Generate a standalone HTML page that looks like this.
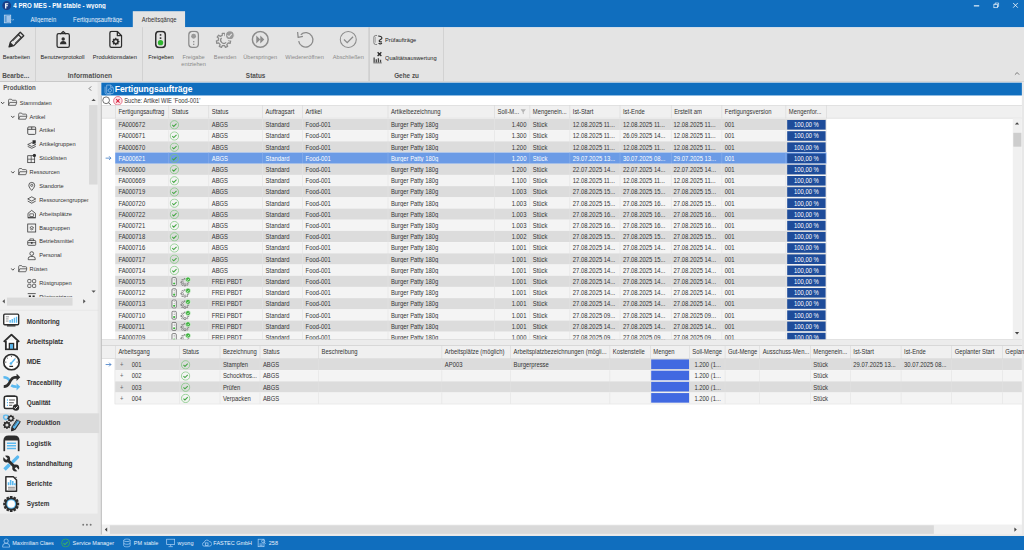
<!DOCTYPE html><html><head><meta charset="utf-8"><style>
html,body{margin:0;padding:0;width:1024px;height:550px;overflow:hidden;background:#fff}
#w{position:absolute;left:0;top:0;width:1920px;height:1032px;transform:scale(0.533333);transform-origin:0 0;font-family:"Liberation Sans",sans-serif;overflow:hidden;background:#f0f0f0}
#w div{box-sizing:border-box}
.t{position:absolute;height:20px;line-height:20px;white-space:nowrap;transform:scaleY(1.1)}
</style></head><body><div id="w">
<div style="position:absolute;left:0px;top:0px;width:1920px;height:51px;background:#106ebe"></div>
<svg style="position:absolute;left:4px;top:2px" width="17" height="17" viewBox="0 0 17 17"><circle cx="8.5" cy="8.5" r="8.5" fill="#1b3f86"/><path d="M5.5 4h6v2.2h-3.6v1.6h3v2h-3v4.2h-2.4z" fill="#fff"/></svg>
<div class="t" style="left:25px;top:0px;font-size:11.5px;color:#fff;font-weight:bold;">4 PRO MES - PM stable - wyong</div>
<div style="position:absolute;left:1826px;top:10px;width:10px;height:1.5px;background:#fff"></div>
<svg style="position:absolute;left:1862px;top:4px" width="12" height="12" viewBox="0 0 12 12"><rect x="1.5" y="4" width="6.5" height="6.5" fill="none" stroke="#fff" stroke-width="1.3"/><path d="M4 4V1.5h6.5V8H8" fill="none" stroke="#fff" stroke-width="1.3"/></svg>
<svg style="position:absolute;left:1898px;top:4px" width="12" height="12" viewBox="0 0 12 12"><path d="M1.5 1.5l9 9M10.5 1.5l-9 9" stroke="#fff" stroke-width="1.5"/></svg>
<svg style="position:absolute;left:7px;top:27px" width="20" height="17" viewBox="0 0 20 17"><rect x="1" y="1" width="12" height="15" fill="none" stroke="#cfe0f3" stroke-width="1.6"/><path d="M4 1v15" stroke="#cfe0f3" stroke-width="1.2"/><rect x="5" y="2" width="7" height="13" fill="#9ec3ea"/><path d="M15 9l2 2 2-2" fill="none" stroke="#cfe0f3" stroke-width="1.2"/></svg>
<div class="t" style="left:57px;top:26px;font-size:11px;color:#e6eefa;font-weight:normal;">Allgemein</div>
<div class="t" style="left:137px;top:26px;font-size:11px;color:#e6eefa;font-weight:normal;">Fertigungsaufträge</div>
<div style="position:absolute;left:249px;top:21px;width:98px;height:31px;background:#e4e4e4"></div>
<div class="t" style="left:266px;top:26px;font-size:11px;color:#333;font-weight:normal;">Arbeitsgänge</div>
<div style="position:absolute;left:0px;top:51px;width:1920px;height:102px;background:#e4e4e4"></div>
<div style="position:absolute;left:0px;top:151.5px;width:1920px;height:2px;background:#c6c6c6"></div>
<div style="position:absolute;left:0px;top:51px;width:249px;height:1px;background:#c8daee"></div>
<div style="position:absolute;left:347px;top:51px;width:1573px;height:1px;background:#c8daee"></div>
<div style="position:absolute;left:65.5px;top:51px;width:1.5px;height:101px;background:#c4c4c4"></div>
<div style="position:absolute;left:266.5px;top:51px;width:1.5px;height:101px;background:#c4c4c4"></div>
<div style="position:absolute;left:691px;top:51px;width:1.5px;height:101px;background:#c4c4c4"></div>
<div style="position:absolute;left:830.5px;top:51px;width:1.5px;height:101px;background:#c4c4c4"></div>
<svg style="position:absolute;left:13px;top:56px" width="36" height="36" viewBox="0 0 36 36"><g fill="none" stroke="#2d2d2d" stroke-width="2.5" stroke-linejoin="round"><path d="M4 32l2.5-9L25 4.5l6.5 6.5L13 29.5z"/><path d="M21 8.5l6.5 6.5"/><path d="M11 21L23 9M15 25L27 13" stroke-width="1.3"/></g><path d="M4 32l2.5-9 6.5 6.5z" fill="#2d2d2d"/></svg>
<div class="t" style="left:5px;top:97px;font-size:10.6px;color:#222;font-weight:normal;">Bearbeiten</div>
<div class="t" style="left:4px;top:131.5px;font-size:12px;color:#505050;font-weight:bold;">Bearbe...</div>
<svg style="position:absolute;left:105px;top:57px" width="27" height="34" viewBox="0 0 27 34"><g fill="none" stroke="#2d2d2d" stroke-width="2.4" stroke-linejoin="round"><rect x="2" y="6" width="23" height="26" rx="3"/><path d="M8 7l5.5-5 5.5 5"/></g><circle cx="13.5" cy="16" r="3.2" fill="#2d2d2d"/><path d="M7.5 26c0-4 2.5-6 6-6s6 2 6 6z" fill="#2d2d2d"/></svg>
<div class="t" style="left:76px;top:97px;font-size:10.6px;color:#222;font-weight:normal;">Benutzerprotokoll</div>
<svg style="position:absolute;left:203px;top:57px" width="27" height="34" viewBox="0 0 27 34"><g fill="none" stroke="#2d2d2d" stroke-width="2.4" stroke-linejoin="round"><path d="M3 5a3 3 0 0 1 3-3h11l8 8v19a3 3 0 0 1-3 3H6a3 3 0 0 1-3-3z"/><path d="M17 2v8h8"/></g><g transform="translate(14 21)"><circle r="4.2" fill="none" stroke="#2d2d2d" stroke-width="3"/><g stroke="#2d2d2d" stroke-width="2.2"><path d="M0-7v3M0 4v3M-7 0h3M4 0h3M-5-5l2 2M3 3l2 2M5-5l-2 2M-3 3l-2 2"/></g></g></svg>
<div class="t" style="left:174px;top:97px;font-size:10.6px;color:#222;font-weight:normal;">Produktionsdaten</div>
<div class="t" style="left:127px;top:131.5px;font-size:12.5px;color:#505050;font-weight:bold;">Informationen</div>
<svg style="position:absolute;left:290px;top:57px" width="22" height="34" viewBox="0 0 22 34"><rect x="2" y="2" width="18" height="30" rx="6" fill="none" stroke="#2d2d2d" stroke-width="2.8"/><rect x="9.5" y="7" width="3" height="3" fill="#2d2d2d"/><rect x="9.5" y="13" width="3" height="3" fill="#2d2d2d"/><circle cx="11" cy="23" r="5" fill="#2fb52f"/></svg>
<div class="t" style="left:278px;top:97px;font-size:10.6px;color:#222;font-weight:normal;">Freigeben</div>
<svg style="position:absolute;left:352px;top:57px" width="22" height="34" viewBox="0 0 22 34"><rect x="2" y="2" width="18" height="30" rx="6.5" fill="none" stroke="#8c8c8c" stroke-width="2.4"/><circle cx="11" cy="11" r="4.5" fill="#9a9a9a"/><rect x="10" y="20" width="2.4" height="2.4" fill="#8c8c8c"/><rect x="10" y="25" width="2.4" height="2.4" fill="#8c8c8c"/></svg>
<div class="t" style="left:323px;top:97px;font-size:10.6px;color:#8a8a8a;font-weight:normal;width:80px;text-align:center">Freigabe</div>
<div class="t" style="left:323px;top:110px;font-size:10.6px;color:#8a8a8a;font-weight:normal;width:80px;text-align:center">entziehen</div>
<svg style="position:absolute;left:404px;top:57px" width="36" height="34" viewBox="0 0 36 34"><g transform="translate(15 19)" fill="none" stroke="#8c8c8c" stroke-width="2.4" stroke-linejoin="round"><path d="M-2.23 -9.75L-2.26 -13.31L2.26 -13.31L2.23 -9.75L6.23 -7.82L9.00 -10.07L11.82 -6.53L9.01 -4.34L10.00 -0.00L13.48 0.76L12.47 5.17L9.01 4.34L6.23 7.82L7.81 11.01L3.74 12.97L2.23 9.75L-2.23 9.75L-3.74 12.97L-7.81 11.01L-6.23 7.82L-9.01 4.34L-12.47 5.17L-13.48 0.76L-10.00 0.00L-9.01 -4.34L-11.82 -6.53L-9.00 -10.07L-6.23 -7.82Z"/><path d="M5 3.5A6 6 0 1 1 -3.5 -5"/></g><circle cx="27" cy="9" r="8.5" fill="#999" stroke="#e4e4e4" stroke-width="2.5"/><path d="M22.5 9.2l3 3 5-5.5" fill="none" stroke="#e4e4e4" stroke-width="2"/></svg>
<div class="t" style="left:401px;top:97px;font-size:10.6px;color:#8a8a8a;font-weight:normal;">Beenden</div>
<svg style="position:absolute;left:471px;top:57px" width="34" height="34" viewBox="0 0 34 34"><circle cx="17" cy="17" r="14.8" fill="none" stroke="#8c8c8c" stroke-width="2.8"/><path d="M9.5 9.5v15l7.5-7.5zM17 9.5v15l7.5-7.5z" fill="#8c8c8c"/></svg>
<div class="t" style="left:456px;top:97px;font-size:10.6px;color:#8a8a8a;font-weight:normal;">Überspringen</div>
<div class="t" style="left:461px;top:131.5px;font-size:12px;color:#505050;font-weight:bold;">Status</div>
<svg style="position:absolute;left:555px;top:57px" width="36" height="34" viewBox="0 0 36 34"><path d="M9 8A13.5 13.5 0 1 1 5 20" fill="none" stroke="#8c8c8c" stroke-width="2.4"/><path d="M3 3l1 10 9-2" fill="none" stroke="#8c8c8c" stroke-width="2.4" stroke-linejoin="round"/></svg>
<div class="t" style="left:535px;top:97px;font-size:10.6px;color:#8a8a8a;font-weight:normal;">Wiedereröffnen</div>
<svg style="position:absolute;left:636px;top:57px" width="34" height="34" viewBox="0 0 34 34"><circle cx="17" cy="17" r="15" fill="none" stroke="#8c8c8c" stroke-width="2"/><path d="M9 17l6 6 11-11" fill="none" stroke="#8c8c8c" stroke-width="2.4"/></svg>
<div class="t" style="left:624px;top:97px;font-size:10.6px;color:#8a8a8a;font-weight:normal;">Abschließen</div>
<svg style="position:absolute;left:699px;top:64px" width="22" height="22" viewBox="0 0 22 22"><path d="M8 2.5H5.5a3.5 3.5 0 0 0-3.5 3.5v10a3.5 3.5 0 0 0 3.5 3.5H8" fill="none" stroke="#555" stroke-width="1.3"/><path d="M5 5v11" stroke="#888" stroke-width="1"/><path d="M10 3.5c4 0 7 1.5 7 4s-5 2.5-5 5 2.5 2 5 2" fill="none" stroke="#2d2d2d" stroke-width="2.2"/><path d="M11 16.5c1.5 2.5 4.5 2.5 6 0" fill="none" stroke="#2d2d2d" stroke-width="2.2"/></svg>
<div class="t" style="left:722px;top:65px;font-size:10.6px;color:#222;font-weight:normal;">Prüfaufträge</div>
<svg style="position:absolute;left:699px;top:96px" width="22" height="24" viewBox="0 0 22 24"><path d="M2.5 21V12M6.5 21v-6M10.5 21v-8M14.5 21v-5" stroke="#444" stroke-width="2.4"/><path d="M1 22h16" stroke="#444" stroke-width="1.2"/><path d="M9 2l7 7M16 2l-7 7" stroke="#2d2d2d" stroke-width="2.4"/><circle cx="12.5" cy="5.5" r="2" fill="#2d2d2d"/></svg>
<div class="t" style="left:722px;top:99px;font-size:10.6px;color:#222;font-weight:normal;">Qualitätsauswertung</div>
<div class="t" style="left:739px;top:131.5px;font-size:12px;color:#505050;font-weight:bold;">Gehe zu</div>
<svg style="position:absolute;left:1901px;top:133px" width="12" height="10" viewBox="0 0 12 10"><path d="M2 7l4-4 4 4" fill="none" stroke="#555" stroke-width="1.4"/></svg>
<div style="position:absolute;left:0px;top:154px;width:183px;height:809px;background:#f0f0f0"></div>
<div style="position:absolute;left:0px;top:963px;width:190px;height:42px;background:#e6e6e6"></div>
<div style="position:absolute;left:183px;top:154px;width:7px;height:851px;background:#e6e6e6"></div>
<div class="t" style="left:6px;top:155px;font-size:11.6px;color:#5a5a5a;font-weight:bold;">Produktion</div>
<svg style="position:absolute;left:164px;top:160px" width="10" height="12" viewBox="0 0 10 12"><path d="M7 2L3 6l4 4" fill="none" stroke="#555" stroke-width="1.4"/></svg>
<div style="position:absolute;left:0;top:178px;width:166px;height:379px;overflow:hidden">
<svg style="position:absolute;left:1.0px;top:12px" width="8" height="6" viewBox="0 0 8 6"><path d="M0.8 1.2L4 4.6l3.2-3.4" fill="none" stroke="#3a3a3a" stroke-width="1.7"/></svg>
<svg style="position:absolute;left:14.0px;top:5.5px" width="19" height="16" viewBox="0 0 19 16"><path d="M2 13.5V4a2 2 0 0 1 2-2h3.5l1.5 2h6a2 2 0 0 1 2 2v2" fill="none" stroke="#4a4a4a" stroke-width="1.5" stroke-linejoin="round"/><path d="M2 13.5l2.2-5.5h13.3l-2.2 5.5z" fill="none" stroke="#4a4a4a" stroke-width="1.5" stroke-linejoin="round"/></svg>
<div class="t" style="left:37.0px;top:4px;font-size:10.6px;color:#333;font-weight:normal;">Stammdaten</div>
<svg style="position:absolute;left:19.5px;top:38px" width="8" height="6" viewBox="0 0 8 6"><path d="M0.8 1.2L4 4.6l3.2-3.4" fill="none" stroke="#3a3a3a" stroke-width="1.7"/></svg>
<svg style="position:absolute;left:32.5px;top:31.5px" width="19" height="16" viewBox="0 0 19 16"><path d="M2 13.5V4a2 2 0 0 1 2-2h3.5l1.5 2h6a2 2 0 0 1 2 2v2" fill="none" stroke="#4a4a4a" stroke-width="1.5" stroke-linejoin="round"/><path d="M2 13.5l2.2-5.5h13.3l-2.2 5.5z" fill="none" stroke="#4a4a4a" stroke-width="1.5" stroke-linejoin="round"/></svg>
<div class="t" style="left:55.5px;top:30px;font-size:10.6px;color:#333;font-weight:normal;">Artikel</div>
<svg style="position:absolute;left:50px;top:57.5px" width="19" height="19" viewBox="0 0 19 19"><rect x="2" y="2" width="15" height="14" rx="2" fill="none" stroke="#2d2d2d" stroke-width="1.5"/><path d="M2 6.5h15M9.5 2v4.5" stroke="#2d2d2d" stroke-width="1.5"/></svg>
<div class="t" style="left:73.5px;top:56px;font-size:10.6px;color:#333;font-weight:normal;">Artikel</div>
<svg style="position:absolute;left:50px;top:83.5px" width="19" height="19" viewBox="0 0 19 19"><path d="M2 9l7.5-3.5L17 9l-7.5 3.5z M2 12.5l7.5 3.5 7.5-3.5" fill="none" stroke="#2d2d2d" stroke-width="1.4"/><rect x="11" y="1" width="6" height="6" fill="#2d2d2d"/></svg>
<div class="t" style="left:73.5px;top:82px;font-size:10.6px;color:#333;font-weight:normal;">Artikelgruppen</div>
<svg style="position:absolute;left:50px;top:109.5px" width="19" height="19" viewBox="0 0 19 19"><rect x="2" y="4" width="13" height="13" fill="none" stroke="#2d2d2d" stroke-width="1.4"/><path d="M2 10.5h13M8.5 4v13" stroke="#2d2d2d" stroke-width="1.2"/><circle cx="14.5" cy="3.5" r="3" fill="#2d2d2d"/></svg>
<div class="t" style="left:73.5px;top:108px;font-size:10.6px;color:#333;font-weight:normal;">Stücklisten</div>
<svg style="position:absolute;left:19.5px;top:142px" width="8" height="6" viewBox="0 0 8 6"><path d="M0.8 1.2L4 4.6l3.2-3.4" fill="none" stroke="#3a3a3a" stroke-width="1.7"/></svg>
<svg style="position:absolute;left:32.5px;top:135.5px" width="19" height="16" viewBox="0 0 19 16"><path d="M2 13.5V4a2 2 0 0 1 2-2h3.5l1.5 2h6a2 2 0 0 1 2 2v2" fill="none" stroke="#4a4a4a" stroke-width="1.5" stroke-linejoin="round"/><path d="M2 13.5l2.2-5.5h13.3l-2.2 5.5z" fill="none" stroke="#4a4a4a" stroke-width="1.5" stroke-linejoin="round"/></svg>
<div class="t" style="left:55.5px;top:134px;font-size:10.6px;color:#333;font-weight:normal;">Ressourcen</div>
<svg style="position:absolute;left:50px;top:161.5px" width="19" height="19" viewBox="0 0 19 19"><path d="M9.5 17s-5.5-5.5-5.5-9.5a5.5 5.5 0 0 1 11 0c0 4-5.5 9.5-5.5 9.5z" fill="none" stroke="#2d2d2d" stroke-width="1.4"/><circle cx="9.5" cy="7.5" r="2" fill="none" stroke="#2d2d2d" stroke-width="1.3"/></svg>
<div class="t" style="left:73.5px;top:160px;font-size:10.6px;color:#333;font-weight:normal;">Standorte</div>
<svg style="position:absolute;left:50px;top:187.5px" width="19" height="19" viewBox="0 0 19 19"><path d="M2 7l7.5-4L17 7l-7.5 4z M2 11l7.5 4 7.5-4" fill="none" stroke="#2d2d2d" stroke-width="1.4"/></svg>
<div class="t" style="left:73.5px;top:186px;font-size:10.6px;color:#333;font-weight:normal;">Ressourcengruppen</div>
<svg style="position:absolute;left:50px;top:213.5px" width="19" height="19" viewBox="0 0 19 19"><path d="M2.5 16V8l7-5.5 7 5.5v8z" fill="none" stroke="#2d2d2d" stroke-width="1.4"/><rect x="6" y="9" width="7" height="5" fill="none" stroke="#2d2d2d" stroke-width="1.2"/><path d="M2 16.5h15" stroke="#2d2d2d" stroke-width="1.4"/></svg>
<div class="t" style="left:73.5px;top:212px;font-size:10.6px;color:#333;font-weight:normal;">Arbeitsplätze</div>
<svg style="position:absolute;left:50px;top:239.5px" width="19" height="19" viewBox="0 0 19 19"><rect x="2" y="2" width="15" height="15" fill="none" stroke="#2d2d2d" stroke-width="1.4"/><path d="M6 8.5l3.5-2 3.5 2-3.5 2zM6 11l3.5 2 3.5-2" fill="none" stroke="#2d2d2d" stroke-width="1.2"/></svg>
<div class="t" style="left:73.5px;top:238px;font-size:10.6px;color:#333;font-weight:normal;">Baugruppen</div>
<svg style="position:absolute;left:50px;top:265.5px" width="19" height="19" viewBox="0 0 19 19"><rect x="2" y="7" width="15" height="9" rx="1.5" fill="none" stroke="#2d2d2d" stroke-width="1.4"/><path d="M6 7V4h7v3M2 11h15" fill="none" stroke="#2d2d2d" stroke-width="1.3"/><rect x="8" y="10" width="3" height="3" fill="#2d2d2d"/></svg>
<div class="t" style="left:73.5px;top:264px;font-size:10.6px;color:#333;font-weight:normal;">Betriebsmittel</div>
<svg style="position:absolute;left:50px;top:291.5px" width="19" height="19" viewBox="0 0 19 19"><circle cx="9.5" cy="5.5" r="3.5" fill="none" stroke="#2d2d2d" stroke-width="1.4"/><path d="M3 17v-2a4 4 0 0 1 4-4h5a4 4 0 0 1 4 4v2z" fill="none" stroke="#2d2d2d" stroke-width="1.4"/></svg>
<div class="t" style="left:73.5px;top:290px;font-size:10.6px;color:#333;font-weight:normal;">Personal</div>
<svg style="position:absolute;left:19.5px;top:324px" width="8" height="6" viewBox="0 0 8 6"><path d="M0.8 1.2L4 4.6l3.2-3.4" fill="none" stroke="#3a3a3a" stroke-width="1.7"/></svg>
<svg style="position:absolute;left:32.5px;top:317.5px" width="19" height="16" viewBox="0 0 19 16"><path d="M2 13.5V4a2 2 0 0 1 2-2h3.5l1.5 2h6a2 2 0 0 1 2 2v2" fill="none" stroke="#4a4a4a" stroke-width="1.5" stroke-linejoin="round"/><path d="M2 13.5l2.2-5.5h13.3l-2.2 5.5z" fill="none" stroke="#4a4a4a" stroke-width="1.5" stroke-linejoin="round"/></svg>
<div class="t" style="left:55.5px;top:316px;font-size:10.6px;color:#333;font-weight:normal;">Rüsten</div>
<svg style="position:absolute;left:50px;top:343.5px" width="19" height="19" viewBox="0 0 19 19"><rect x="2" y="2" width="6" height="6" rx="1.5" fill="none" stroke="#2d2d2d" stroke-width="1.3"/><rect x="11" y="2" width="6" height="6" rx="1.5" fill="none" stroke="#2d2d2d" stroke-width="1.3"/><rect x="2" y="11" width="6" height="6" rx="1.5" fill="none" stroke="#2d2d2d" stroke-width="1.3"/><rect x="11" y="11" width="6" height="6" rx="1.5" fill="none" stroke="#2d2d2d" stroke-width="1.3"/></svg>
<div class="t" style="left:73.5px;top:342px;font-size:10.6px;color:#333;font-weight:normal;">Rüstgruppen</div>
<svg style="position:absolute;left:50px;top:369.5px" width="19" height="19" viewBox="0 0 19 19"><path d="M2 2.5h15" stroke="#2d2d2d" stroke-width="1.4"/><rect x="4" y="6" width="4" height="4" fill="#2d2d2d"/><rect x="11" y="6" width="4" height="4" fill="#2d2d2d"/></svg>
<div class="t" style="left:73.5px;top:368px;font-size:10.6px;color:#333;font-weight:normal;">Rüstmatrizen</div>
</div>
<div style="position:absolute;left:168px;top:178px;width:15px;height:374px;background:#f0f0f0"></div>
<svg style="position:absolute;left:169px;top:182px" width="13" height="10" viewBox="0 0 13 10"><path d="M2.5 7.5L6.5 3l4 4.5z" fill="#555"/></svg>
<div style="position:absolute;left:167px;top:197px;width:16px;height:149px;background:#dadada"></div>
<svg style="position:absolute;left:169px;top:542px" width="13" height="10" viewBox="0 0 13 10"><path d="M2.5 2.5L6.5 7l4-4.5z" fill="#555"/></svg>
<div style="position:absolute;left:0px;top:557px;width:168px;height:16px;background:#f0f0f0"></div>
<svg style="position:absolute;left:1px;top:559px" width="12" height="12" viewBox="0 0 12 12"><path d="M8 2L3.5 6 8 10z" fill="#555"/></svg>
<div style="position:absolute;left:13px;top:558px;width:123px;height:15px;background:#dadada"></div>
<svg style="position:absolute;left:152px;top:559px" width="12" height="12" viewBox="0 0 12 12"><path d="M4 2l4.5 4L4 10z" fill="#555"/></svg>
<div style="position:absolute;left:0px;top:581px;width:186px;height:1px;background:#dedede"></div>
<svg style="position:absolute;left:5px;top:587px" width="34" height="32" viewBox="0 0 34 32"><rect x="2" y="2" width="28" height="20" rx="2" fill="#fff" stroke="#2d2d2d" stroke-width="2.6"/><path d="M8 24h16" stroke="#2d2d2d" stroke-width="2.4"/><path d="M6 7h6M6 11h5M6 15h5" stroke="#888" stroke-width="1.6"/><path d="M14 18v-5M18 18v-7M22 18v-9M26 18V7" stroke="#5bb9f0" stroke-width="2.6"/></svg>
<div class="t" style="left:50px;top:593px;font-size:12px;color:#333;font-weight:bold;">Monitoring</div>
<svg style="position:absolute;left:5px;top:625px" width="34" height="32" viewBox="0 0 34 32"><path d="M2 16L16.5 2.5 31 16" fill="none" stroke="#2d2d2d" stroke-width="3.6" stroke-linejoin="round"/><path d="M6 13.5V30h21V13.5" fill="#fff" stroke="#2d2d2d" stroke-width="3.4"/><rect x="12.5" y="19" width="8" height="11" fill="#5bb9f0" stroke="#2d2d2d" stroke-width="2.4"/></svg>
<div class="t" style="left:50px;top:631px;font-size:12px;color:#333;font-weight:bold;">Arbeitsplatz</div>
<svg style="position:absolute;left:5px;top:663px" width="34" height="32" viewBox="0 0 34 32"><circle cx="16.5" cy="16" r="14.5" fill="#fff" stroke="#2d2d2d" stroke-width="3.2"/><path d="M16.5 4v2.5M8 7.5l1.8 1.8M25 7.5l-1.8 1.8M4.5 16h2.5M26 16h2.5" stroke="#2d2d2d" stroke-width="1.4"/><path d="M15.5 18.5l7.5-8.5" stroke="#5bb9f0" stroke-width="2.6"/><circle cx="15.5" cy="18.5" r="2.4" fill="#5bb9f0"/><path d="M12.5 24h7" stroke="#2d2d2d" stroke-width="2"/></svg>
<div class="t" style="left:50px;top:669px;font-size:12px;color:#333;font-weight:bold;">MDE</div>
<svg style="position:absolute;left:5px;top:701px" width="34" height="32" viewBox="0 0 34 32"><path d="M1.5 6.5C7 6.5 10 7.5 13 13" fill="none" stroke="#5bb9f0" stroke-width="4.8"/><path d="M16 21.5C19 23.5 22 24 26.5 24" fill="none" stroke="#5bb9f0" stroke-width="4.8"/><path d="M26 17.5l7 6.5-7 7z" fill="#5bb9f0"/><path d="M2 24C8 24 10 22 12 18S16 7 23 6.5H27" fill="none" stroke="#2d2d2d" stroke-width="5"/><path d="M26 -0.5l7 7-7 7z" fill="#2d2d2d"/></svg>
<div class="t" style="left:50px;top:707px;font-size:12px;color:#333;font-weight:bold;">Traceability</div>
<svg style="position:absolute;left:5px;top:739px" width="34" height="32" viewBox="0 0 34 32"><rect x="3" y="4" width="24" height="23" rx="3" fill="#fff" stroke="#2d2d2d" stroke-width="3"/><path d="M7 4h16" stroke="#2d2d2d" stroke-width="3"/><path d="M8 11h2M8 16h2M8 21h2" stroke="#5bb9f0" stroke-width="2.5"/><path d="M12 11h11M12 16h9M12 21h6" stroke="#555" stroke-width="2"/><circle cx="25" cy="25" r="6" fill="#2d2d2d"/><path d="M22 25l2 2 4-4" fill="none" stroke="#fff" stroke-width="1.8"/></svg>
<div class="t" style="left:50px;top:745px;font-size:12px;color:#333;font-weight:bold;">Qualität</div>
<div style="position:absolute;left:0px;top:774.5px;width:186px;height:37px;background:#dcdcdc"></div>
<svg style="position:absolute;left:5px;top:777px" width="34" height="32" viewBox="0 0 34 32"><g transform="translate(6 5)" fill="none" stroke="#5bb9f0" stroke-width="2"><path d="M-0.81 -3.71L-0.77 -4.74L0.77 -4.74L0.81 -3.71L2.05 -3.20L2.80 -3.90L3.90 -2.80L3.20 -2.05L3.71 -0.81L4.74 -0.77L4.74 0.77L3.71 0.81L3.20 2.05L3.90 2.80L2.80 3.90L2.05 3.20L0.81 3.71L0.77 4.74L-0.77 4.74L-0.81 3.71L-2.05 3.20L-2.80 3.90L-3.90 2.80L-3.20 2.05L-3.71 0.81L-4.74 0.77L-4.74 -0.77L-3.71 -0.81L-3.20 -2.05L-3.90 -2.80L-2.80 -3.90L-2.05 -3.20Z"/></g><g transform="translate(15.5 7.5)"><path d="M-1.20 -5.47L-1.10 -6.71L1.10 -6.71L1.20 -5.47L3.02 -4.72L3.97 -5.52L5.52 -3.97L4.72 -3.02L5.47 -1.20L6.71 -1.10L6.71 1.10L5.47 1.20L4.72 3.02L5.52 3.97L3.97 5.52L3.02 4.72L1.20 5.47L1.10 6.71L-1.10 6.71L-1.20 5.47L-3.02 4.72L-3.97 5.52L-5.52 3.97L-4.72 3.02L-5.47 1.20L-6.71 1.10L-6.71 -1.10L-5.47 -1.20L-4.72 -3.02L-5.52 -3.97L-3.97 -5.52L-3.02 -4.72Z" fill="#2d2d2d"/><circle r="2.6" fill="#dcdcdc"/></g><g transform="translate(8 20)"><path d="M-1.33 -6.06L-1.21 -7.40L1.21 -7.40L1.33 -6.06L3.34 -5.22L4.38 -6.09L6.09 -4.38L5.22 -3.34L6.06 -1.33L7.40 -1.21L7.40 1.21L6.06 1.33L5.22 3.34L6.09 4.38L4.38 6.09L3.34 5.22L1.33 6.06L1.21 7.40L-1.21 7.40L-1.33 6.06L-3.34 5.22L-4.38 6.09L-6.09 4.38L-5.22 3.34L-6.06 1.33L-7.40 1.21L-7.40 -1.21L-6.06 -1.33L-5.22 -3.34L-6.09 -4.38L-4.38 -6.09L-3.34 -5.22Z" fill="#2d2d2d"/><circle r="2.9" fill="#dcdcdc"/></g><path d="M16.5 31l1-7.5L27 9.5l6 4.2-9.5 14z" fill="#5bb9f0" stroke="#2d2d2d" stroke-width="2" stroke-linejoin="round"/><path d="M16.5 31l1-7.5 6 4.2z" fill="#2d2d2d"/><path d="M21 22l7.5-10.5" stroke="#2d2d2d" stroke-width="1"/><path d="M26.5 8.5l6 4.2" stroke="#fff" stroke-width="1.2"/></svg>
<div class="t" style="left:50px;top:783px;font-size:12px;color:#333;font-weight:bold;">Produktion</div>
<svg style="position:absolute;left:5px;top:815px" width="34" height="32" viewBox="0 0 34 32"><path d="M3 31V11c0-5 3-8 8-8h11c5 0 8 3 8 8v20" fill="none" stroke="#2d2d2d" stroke-width="3.2"/><path d="M4 7c1-3 4-4 7-4h11c3 0 6 1 7 4v4H4z" fill="#2d2d2d"/><path d="M8 16h17M8 21h17M8 26h17" stroke="#5bb9f0" stroke-width="2.8"/></svg>
<div class="t" style="left:50px;top:821px;font-size:12px;color:#333;font-weight:bold;">Logistik</div>
<svg style="position:absolute;left:5px;top:853px" width="34" height="32" viewBox="0 0 34 32"><path d="M19.5 12.5L28 4" stroke="#5bb9f0" stroke-width="6" stroke-linecap="round"/><path d="M3.5 27.5l9.5-9.5" stroke="#5bb9f0" stroke-width="6.5"/><path d="M8.5 8.5l15 15" stroke="#2d2d2d" stroke-width="5.5"/><circle cx="7.5" cy="7.5" r="6.5" fill="#2d2d2d"/><circle cx="24.5" cy="24.5" r="6.5" fill="#2d2d2d"/><path d="M2 2l6 6" stroke="#f0f0f0" stroke-width="4"/><path d="M30 30l-6-6" stroke="#f0f0f0" stroke-width="4"/></svg>
<div class="t" style="left:50px;top:859px;font-size:12px;color:#333;font-weight:bold;">Instandhaltung</div>
<svg style="position:absolute;left:5px;top:891px" width="34" height="32" viewBox="0 0 34 32"><path d="M6 3h14l6 6v21H6z" fill="#fff" stroke="#2d2d2d" stroke-width="2.8" stroke-linejoin="round"/><path d="M11 19v-6M15 19V9M19 19v-8M23 19v-4" stroke="#5bb9f0" stroke-width="3"/><path d="M10 22.5h13M10 26h13" stroke="#888" stroke-width="2"/><circle cx="25" cy="4" r="1.3" fill="#2d2d2d"/></svg>
<div class="t" style="left:50px;top:897px;font-size:12px;color:#333;font-weight:bold;">Berichte</div>
<svg style="position:absolute;left:5px;top:929px" width="34" height="32" viewBox="0 0 34 32"><g transform="translate(16 16)"><circle r="12" fill="#2d2d2d"/><rect x="-2.5" y="-15" width="5" height="6" fill="#2d2d2d" transform="rotate(0)"/><rect x="-2.5" y="-15" width="5" height="6" fill="#2d2d2d" transform="rotate(30)"/><rect x="-2.5" y="-15" width="5" height="6" fill="#2d2d2d" transform="rotate(60)"/><rect x="-2.5" y="-15" width="5" height="6" fill="#2d2d2d" transform="rotate(90)"/><rect x="-2.5" y="-15" width="5" height="6" fill="#2d2d2d" transform="rotate(120)"/><rect x="-2.5" y="-15" width="5" height="6" fill="#2d2d2d" transform="rotate(150)"/><rect x="-2.5" y="-15" width="5" height="6" fill="#2d2d2d" transform="rotate(180)"/><rect x="-2.5" y="-15" width="5" height="6" fill="#2d2d2d" transform="rotate(210)"/><rect x="-2.5" y="-15" width="5" height="6" fill="#2d2d2d" transform="rotate(240)"/><rect x="-2.5" y="-15" width="5" height="6" fill="#2d2d2d" transform="rotate(270)"/><rect x="-2.5" y="-15" width="5" height="6" fill="#2d2d2d" transform="rotate(300)"/><rect x="-2.5" y="-15" width="5" height="6" fill="#2d2d2d" transform="rotate(330)"/><circle r="9" fill="#5bb9f0"/><circle r="7" fill="#fff"/></g></svg>
<div class="t" style="left:50px;top:935px;font-size:12px;color:#333;font-weight:bold;">System</div>
<svg style="position:absolute;left:153px;top:980px" width="20" height="8" viewBox="0 0 20 8"><circle cx="3" cy="4" r="1.8" fill="#777"/><circle cx="10" cy="4" r="1.8" fill="#777"/><circle cx="17" cy="4" r="1.8" fill="#777"/></svg>
<div style="position:absolute;left:190px;top:153px;width:1730px;height:852px;background:#e8e8e8"></div>
<div style="position:absolute;left:190px;top:155px;width:1726px;height:829px;background:#fff"></div>
<div style="position:absolute;left:190px;top:155px;width:1726px;height:24px;background:#106ebe"></div>
<div style="position:absolute;left:190px;top:197px;width:1726px;height:1px;background:#d4d4d4"></div>
<svg style="position:absolute;left:193px;top:157px" width="24" height="22" viewBox="0 0 24 22"><g fill="none" stroke="#9cc3ec" stroke-width="1.3"><path d="M4 5.5v11a3 3 0 0 0 3 3h8"/><path d="M7 2.5h7.5l5 5v9a2 2 0 0 1-2 2H9a2 2 0 0 1-2-2z"/><path d="M14.5 2.5v5h5"/><circle cx="13" cy="12.5" r="3"/><path d="M13 8.5v1M13 15.5v1M9 12.5h1M16 12.5h1"/></g></svg>
<div class="t" style="left:215px;top:157px;font-size:16px;color:#fff;font-weight:bold;">Fertigungsaufträge</div>
<svg style="position:absolute;left:191px;top:180px" width="20" height="20" viewBox="0 0 20 20"><circle cx="8" cy="8" r="6.3" fill="none" stroke="#444" stroke-width="1.4"/><path d="M12.5 12.5l5 5" stroke="#444" stroke-width="1.6"/></svg>
<svg style="position:absolute;left:211px;top:179px" width="20" height="20" viewBox="0 0 20 20"><circle cx="10" cy="10" r="8" fill="#fbe4e8" stroke="#e0607a" stroke-width="1.6"/><path d="M6.8 6.8l6.4 6.4M13.2 6.8l-6.4 6.4" stroke="#d8203c" stroke-width="2"/></svg>
<div class="t" style="left:233px;top:178.5px;font-size:10.8px;color:#333;font-weight:normal;">Suche: Artikel WIE &#39;Food-001&#39;</div>
<div style="position:absolute;left:190px;top:197px;width:1726px;height:25px;background:#f0f0f0;border-bottom:1px solid #d4d4d4;border-top:1px solid #d4d4d4"></div>
<div style="position:absolute;left:216px;top:197px;width:1px;height:25px;background:#d4d4d4"></div>
<div style="position:absolute;left:316px;top:197px;width:1px;height:25px;background:#d4d4d4"></div>
<div class="t" style="left:222px;top:200px;font-size:11px;color:#333;font-weight:normal;">Fertigungsauftrag</div>
<div style="position:absolute;left:391px;top:197px;width:1px;height:25px;background:#d4d4d4"></div>
<div class="t" style="left:322px;top:200px;font-size:11px;color:#333;font-weight:normal;">Status</div>
<div style="position:absolute;left:492px;top:197px;width:1px;height:25px;background:#d4d4d4"></div>
<div class="t" style="left:397px;top:200px;font-size:11px;color:#333;font-weight:normal;">Status</div>
<div style="position:absolute;left:567px;top:197px;width:1px;height:25px;background:#d4d4d4"></div>
<div class="t" style="left:498px;top:200px;font-size:11px;color:#333;font-weight:normal;">Auftragsart</div>
<div style="position:absolute;left:727px;top:197px;width:1px;height:25px;background:#d4d4d4"></div>
<div class="t" style="left:573px;top:200px;font-size:11px;color:#333;font-weight:normal;">Artikel</div>
<div style="position:absolute;left:927px;top:197px;width:1px;height:25px;background:#d4d4d4"></div>
<div class="t" style="left:733px;top:200px;font-size:11px;color:#333;font-weight:normal;">Artikelbezeichnung</div>
<div style="position:absolute;left:993px;top:197px;width:1px;height:25px;background:#d4d4d4"></div>
<div class="t" style="left:933px;top:200px;font-size:11px;color:#333;font-weight:normal;">Soll-M...</div>
<div style="position:absolute;left:1068px;top:197px;width:1px;height:25px;background:#d4d4d4"></div>
<div class="t" style="left:999px;top:200px;font-size:11px;color:#333;font-weight:normal;">Mengenein...</div>
<div style="position:absolute;left:1162px;top:197px;width:1px;height:25px;background:#d4d4d4"></div>
<div class="t" style="left:1074px;top:200px;font-size:11px;color:#333;font-weight:normal;">Ist-Start</div>
<div style="position:absolute;left:1258px;top:197px;width:1px;height:25px;background:#d4d4d4"></div>
<div class="t" style="left:1168px;top:200px;font-size:11px;color:#333;font-weight:normal;">Ist-Ende</div>
<div style="position:absolute;left:1353px;top:197px;width:1px;height:25px;background:#d4d4d4"></div>
<div class="t" style="left:1264px;top:200px;font-size:11px;color:#333;font-weight:normal;">Erstellt am</div>
<div style="position:absolute;left:1473px;top:197px;width:1px;height:25px;background:#d4d4d4"></div>
<div class="t" style="left:1359px;top:200px;font-size:11px;color:#333;font-weight:normal;">Fertigungsversion</div>
<div style="position:absolute;left:1549px;top:197px;width:1px;height:25px;background:#d4d4d4"></div>
<div class="t" style="left:1479px;top:200px;font-size:11px;color:#333;font-weight:normal;">Mengenfor...</div>
<svg style="position:absolute;left:974px;top:202px" width="14" height="14" viewBox="0 0 14 14"><path d="M2 3h10L8 8v4l-2-1V8z" fill="#b5b5b5"/></svg>
<div style="position:absolute;left:0;top:222.5px;width:1899px;height:414px;overflow:hidden">
<div style="position:absolute;left:216px;top:0px;width:1333px;height:21px;background:#dcdcdc"></div>
<div style="position:absolute;left:316px;top:0px;width:1px;height:21px;background:#e4e4e4"></div>
<div style="position:absolute;left:391px;top:0px;width:1px;height:21px;background:#e4e4e4"></div>
<div style="position:absolute;left:492px;top:0px;width:1px;height:21px;background:#e4e4e4"></div>
<div style="position:absolute;left:567px;top:0px;width:1px;height:21px;background:#e4e4e4"></div>
<div style="position:absolute;left:727px;top:0px;width:1px;height:21px;background:#e4e4e4"></div>
<div style="position:absolute;left:927px;top:0px;width:1px;height:21px;background:#e4e4e4"></div>
<div style="position:absolute;left:993px;top:0px;width:1px;height:21px;background:#e4e4e4"></div>
<div style="position:absolute;left:1068px;top:0px;width:1px;height:21px;background:#e4e4e4"></div>
<div style="position:absolute;left:1162px;top:0px;width:1px;height:21px;background:#e4e4e4"></div>
<div style="position:absolute;left:1258px;top:0px;width:1px;height:21px;background:#e4e4e4"></div>
<div style="position:absolute;left:1353px;top:0px;width:1px;height:21px;background:#e4e4e4"></div>
<div style="position:absolute;left:1473px;top:0px;width:1px;height:21px;background:#e4e4e4"></div>
<div style="position:absolute;left:1549px;top:0px;width:1px;height:21px;background:#e4e4e4"></div>
<div class="t" style="left:222px;top:1px;font-size:11px;color:#333;font-weight:normal;">FA000672</div>
<svg style="position:absolute;left:318px;top:2px" width="18" height="18" viewBox="0 0 18 18"><circle cx="9" cy="9" r="7.8" fill="none" stroke="#7cc77c" stroke-width="1.4"/><path d="M5 9.2l2.8 2.8 5.2-5.2" fill="none" stroke="#44a844" stroke-width="2"/></svg>
<div class="t" style="left:397px;top:1px;font-size:11px;color:#333;font-weight:normal;">ABGS</div>
<div class="t" style="left:498px;top:1px;font-size:11px;color:#333;font-weight:normal;">Standard</div>
<div class="t" style="left:573px;top:1px;font-size:11px;color:#333;font-weight:normal;">Food-001</div>
<div class="t" style="left:733px;top:1px;font-size:11px;color:#333;font-weight:normal;">Burger Patty 180g</div>
<div class="t" style="left:927px;top:1px;font-size:11px;color:#333;font-weight:normal;width:60px;text-align:right">1.400</div>
<div class="t" style="left:999px;top:1px;font-size:11px;color:#333;font-weight:normal;">Stück</div>
<div class="t" style="left:1074px;top:1px;font-size:11px;color:#333;font-weight:normal;">12.08.2025 11...</div>
<div class="t" style="left:1168px;top:1px;font-size:11px;color:#333;font-weight:normal;">12.08.2025 11...</div>
<div class="t" style="left:1263px;top:1px;font-size:11px;color:#333;font-weight:normal;">12.08.2025 11...</div>
<div class="t" style="left:1359px;top:1px;font-size:11px;color:#333;font-weight:normal;">001</div>
<div style="position:absolute;left:1476px;top:2px;width:72px;height:18px;background:#1e4c9a"></div>
<div class="t" style="left:1476px;top:1px;font-size:11px;color:#fff;font-weight:normal;width:72px;text-align:center">100,00 %</div>
<div style="position:absolute;left:216px;top:21px;width:1333px;height:21px;background:#f4f4f4"></div>
<div style="position:absolute;left:316px;top:21px;width:1px;height:21px;background:#e0e0e0"></div>
<div style="position:absolute;left:391px;top:21px;width:1px;height:21px;background:#e0e0e0"></div>
<div style="position:absolute;left:492px;top:21px;width:1px;height:21px;background:#e0e0e0"></div>
<div style="position:absolute;left:567px;top:21px;width:1px;height:21px;background:#e0e0e0"></div>
<div style="position:absolute;left:727px;top:21px;width:1px;height:21px;background:#e0e0e0"></div>
<div style="position:absolute;left:927px;top:21px;width:1px;height:21px;background:#e0e0e0"></div>
<div style="position:absolute;left:993px;top:21px;width:1px;height:21px;background:#e0e0e0"></div>
<div style="position:absolute;left:1068px;top:21px;width:1px;height:21px;background:#e0e0e0"></div>
<div style="position:absolute;left:1162px;top:21px;width:1px;height:21px;background:#e0e0e0"></div>
<div style="position:absolute;left:1258px;top:21px;width:1px;height:21px;background:#e0e0e0"></div>
<div style="position:absolute;left:1353px;top:21px;width:1px;height:21px;background:#e0e0e0"></div>
<div style="position:absolute;left:1473px;top:21px;width:1px;height:21px;background:#e0e0e0"></div>
<div style="position:absolute;left:1549px;top:21px;width:1px;height:21px;background:#e0e0e0"></div>
<div class="t" style="left:222px;top:22px;font-size:11px;color:#333;font-weight:normal;">FA000671</div>
<svg style="position:absolute;left:318px;top:23px" width="18" height="18" viewBox="0 0 18 18"><circle cx="9" cy="9" r="7.8" fill="none" stroke="#7cc77c" stroke-width="1.4"/><path d="M5 9.2l2.8 2.8 5.2-5.2" fill="none" stroke="#44a844" stroke-width="2"/></svg>
<div class="t" style="left:397px;top:22px;font-size:11px;color:#333;font-weight:normal;">ABGS</div>
<div class="t" style="left:498px;top:22px;font-size:11px;color:#333;font-weight:normal;">Standard</div>
<div class="t" style="left:573px;top:22px;font-size:11px;color:#333;font-weight:normal;">Food-001</div>
<div class="t" style="left:733px;top:22px;font-size:11px;color:#333;font-weight:normal;">Burger Patty 180g</div>
<div class="t" style="left:927px;top:22px;font-size:11px;color:#333;font-weight:normal;width:60px;text-align:right">1.300</div>
<div class="t" style="left:999px;top:22px;font-size:11px;color:#333;font-weight:normal;">Stück</div>
<div class="t" style="left:1074px;top:22px;font-size:11px;color:#333;font-weight:normal;">12.08.2025 11...</div>
<div class="t" style="left:1168px;top:22px;font-size:11px;color:#333;font-weight:normal;">26.09.2025 14...</div>
<div class="t" style="left:1263px;top:22px;font-size:11px;color:#333;font-weight:normal;">12.08.2025 11...</div>
<div class="t" style="left:1359px;top:22px;font-size:11px;color:#333;font-weight:normal;">001</div>
<div style="position:absolute;left:1476px;top:23px;width:72px;height:18px;background:#1e4c9a"></div>
<div class="t" style="left:1476px;top:22px;font-size:11px;color:#fff;font-weight:normal;width:72px;text-align:center">100,00 %</div>
<div style="position:absolute;left:216px;top:42px;width:1333px;height:21px;background:#dcdcdc"></div>
<div style="position:absolute;left:316px;top:42px;width:1px;height:21px;background:#e4e4e4"></div>
<div style="position:absolute;left:391px;top:42px;width:1px;height:21px;background:#e4e4e4"></div>
<div style="position:absolute;left:492px;top:42px;width:1px;height:21px;background:#e4e4e4"></div>
<div style="position:absolute;left:567px;top:42px;width:1px;height:21px;background:#e4e4e4"></div>
<div style="position:absolute;left:727px;top:42px;width:1px;height:21px;background:#e4e4e4"></div>
<div style="position:absolute;left:927px;top:42px;width:1px;height:21px;background:#e4e4e4"></div>
<div style="position:absolute;left:993px;top:42px;width:1px;height:21px;background:#e4e4e4"></div>
<div style="position:absolute;left:1068px;top:42px;width:1px;height:21px;background:#e4e4e4"></div>
<div style="position:absolute;left:1162px;top:42px;width:1px;height:21px;background:#e4e4e4"></div>
<div style="position:absolute;left:1258px;top:42px;width:1px;height:21px;background:#e4e4e4"></div>
<div style="position:absolute;left:1353px;top:42px;width:1px;height:21px;background:#e4e4e4"></div>
<div style="position:absolute;left:1473px;top:42px;width:1px;height:21px;background:#e4e4e4"></div>
<div style="position:absolute;left:1549px;top:42px;width:1px;height:21px;background:#e4e4e4"></div>
<div class="t" style="left:222px;top:43px;font-size:11px;color:#333;font-weight:normal;">FA000670</div>
<svg style="position:absolute;left:318px;top:44px" width="18" height="18" viewBox="0 0 18 18"><circle cx="9" cy="9" r="7.8" fill="none" stroke="#7cc77c" stroke-width="1.4"/><path d="M5 9.2l2.8 2.8 5.2-5.2" fill="none" stroke="#44a844" stroke-width="2"/></svg>
<div class="t" style="left:397px;top:43px;font-size:11px;color:#333;font-weight:normal;">ABGS</div>
<div class="t" style="left:498px;top:43px;font-size:11px;color:#333;font-weight:normal;">Standard</div>
<div class="t" style="left:573px;top:43px;font-size:11px;color:#333;font-weight:normal;">Food-001</div>
<div class="t" style="left:733px;top:43px;font-size:11px;color:#333;font-weight:normal;">Burger Patty 180g</div>
<div class="t" style="left:927px;top:43px;font-size:11px;color:#333;font-weight:normal;width:60px;text-align:right">1.200</div>
<div class="t" style="left:999px;top:43px;font-size:11px;color:#333;font-weight:normal;">Stück</div>
<div class="t" style="left:1074px;top:43px;font-size:11px;color:#333;font-weight:normal;">12.08.2025 11...</div>
<div class="t" style="left:1168px;top:43px;font-size:11px;color:#333;font-weight:normal;">12.08.2025 11...</div>
<div class="t" style="left:1263px;top:43px;font-size:11px;color:#333;font-weight:normal;">12.08.2025 11...</div>
<div class="t" style="left:1359px;top:43px;font-size:11px;color:#333;font-weight:normal;">001</div>
<div style="position:absolute;left:1476px;top:44px;width:72px;height:18px;background:#1e4c9a"></div>
<div class="t" style="left:1476px;top:43px;font-size:11px;color:#fff;font-weight:normal;width:72px;text-align:center">100,00 %</div>
<div style="position:absolute;left:216px;top:63px;width:1333px;height:21px;background:#6b9be6"></div>
<div style="position:absolute;left:316px;top:63px;width:1px;height:21px;background:#8fb3ec"></div>
<div style="position:absolute;left:391px;top:63px;width:1px;height:21px;background:#8fb3ec"></div>
<div style="position:absolute;left:492px;top:63px;width:1px;height:21px;background:#8fb3ec"></div>
<div style="position:absolute;left:567px;top:63px;width:1px;height:21px;background:#8fb3ec"></div>
<div style="position:absolute;left:727px;top:63px;width:1px;height:21px;background:#8fb3ec"></div>
<div style="position:absolute;left:927px;top:63px;width:1px;height:21px;background:#8fb3ec"></div>
<div style="position:absolute;left:993px;top:63px;width:1px;height:21px;background:#8fb3ec"></div>
<div style="position:absolute;left:1068px;top:63px;width:1px;height:21px;background:#8fb3ec"></div>
<div style="position:absolute;left:1162px;top:63px;width:1px;height:21px;background:#8fb3ec"></div>
<div style="position:absolute;left:1258px;top:63px;width:1px;height:21px;background:#8fb3ec"></div>
<div style="position:absolute;left:1353px;top:63px;width:1px;height:21px;background:#8fb3ec"></div>
<div style="position:absolute;left:1473px;top:63px;width:1px;height:21px;background:#8fb3ec"></div>
<div style="position:absolute;left:1549px;top:63px;width:1px;height:21px;background:#8fb3ec"></div>
<div class="t" style="left:222px;top:64px;font-size:11px;color:#fff;font-weight:normal;">FA000621</div>
<svg style="position:absolute;left:318px;top:65px" width="18" height="18" viewBox="0 0 18 18"><circle cx="9" cy="9" r="7.8" fill="none" stroke="#7cc77c" stroke-width="1.4"/><path d="M5 9.2l2.8 2.8 5.2-5.2" fill="none" stroke="#44a844" stroke-width="2"/></svg>
<div class="t" style="left:397px;top:64px;font-size:11px;color:#fff;font-weight:normal;">ABGS</div>
<div class="t" style="left:498px;top:64px;font-size:11px;color:#fff;font-weight:normal;">Standard</div>
<div class="t" style="left:573px;top:64px;font-size:11px;color:#fff;font-weight:normal;">Food-001</div>
<div class="t" style="left:733px;top:64px;font-size:11px;color:#fff;font-weight:normal;">Burger Patty 180g</div>
<div class="t" style="left:927px;top:64px;font-size:11px;color:#fff;font-weight:normal;width:60px;text-align:right">1.200</div>
<div class="t" style="left:999px;top:64px;font-size:11px;color:#fff;font-weight:normal;">Stück</div>
<div class="t" style="left:1074px;top:64px;font-size:11px;color:#fff;font-weight:normal;">29.07.2025 13...</div>
<div class="t" style="left:1168px;top:64px;font-size:11px;color:#fff;font-weight:normal;">30.07.2025 08...</div>
<div class="t" style="left:1263px;top:64px;font-size:11px;color:#fff;font-weight:normal;">29.07.2025 13...</div>
<div class="t" style="left:1359px;top:64px;font-size:11px;color:#fff;font-weight:normal;">001</div>
<div style="position:absolute;left:1476px;top:65px;width:72px;height:18px;background:#1e4c9a"></div>
<div class="t" style="left:1476px;top:64px;font-size:11px;color:#fff;font-weight:normal;width:72px;text-align:center">100,00 %</div>
<svg style="position:absolute;left:197px;top:68px" width="14" height="11" viewBox="0 0 14 11"><path d="M1 5.5h10M7.5 2l3.5 3.5L7.5 9" fill="none" stroke="#2f6fc0" stroke-width="1.4"/></svg>
<div style="position:absolute;left:216px;top:84px;width:1333px;height:21px;background:#dcdcdc"></div>
<div style="position:absolute;left:316px;top:84px;width:1px;height:21px;background:#e4e4e4"></div>
<div style="position:absolute;left:391px;top:84px;width:1px;height:21px;background:#e4e4e4"></div>
<div style="position:absolute;left:492px;top:84px;width:1px;height:21px;background:#e4e4e4"></div>
<div style="position:absolute;left:567px;top:84px;width:1px;height:21px;background:#e4e4e4"></div>
<div style="position:absolute;left:727px;top:84px;width:1px;height:21px;background:#e4e4e4"></div>
<div style="position:absolute;left:927px;top:84px;width:1px;height:21px;background:#e4e4e4"></div>
<div style="position:absolute;left:993px;top:84px;width:1px;height:21px;background:#e4e4e4"></div>
<div style="position:absolute;left:1068px;top:84px;width:1px;height:21px;background:#e4e4e4"></div>
<div style="position:absolute;left:1162px;top:84px;width:1px;height:21px;background:#e4e4e4"></div>
<div style="position:absolute;left:1258px;top:84px;width:1px;height:21px;background:#e4e4e4"></div>
<div style="position:absolute;left:1353px;top:84px;width:1px;height:21px;background:#e4e4e4"></div>
<div style="position:absolute;left:1473px;top:84px;width:1px;height:21px;background:#e4e4e4"></div>
<div style="position:absolute;left:1549px;top:84px;width:1px;height:21px;background:#e4e4e4"></div>
<div class="t" style="left:222px;top:85px;font-size:11px;color:#333;font-weight:normal;">FA000600</div>
<svg style="position:absolute;left:318px;top:86px" width="18" height="18" viewBox="0 0 18 18"><circle cx="9" cy="9" r="7.8" fill="none" stroke="#7cc77c" stroke-width="1.4"/><path d="M5 9.2l2.8 2.8 5.2-5.2" fill="none" stroke="#44a844" stroke-width="2"/></svg>
<div class="t" style="left:397px;top:85px;font-size:11px;color:#333;font-weight:normal;">ABGS</div>
<div class="t" style="left:498px;top:85px;font-size:11px;color:#333;font-weight:normal;">Standard</div>
<div class="t" style="left:573px;top:85px;font-size:11px;color:#333;font-weight:normal;">Food-001</div>
<div class="t" style="left:733px;top:85px;font-size:11px;color:#333;font-weight:normal;">Burger Patty 180g</div>
<div class="t" style="left:927px;top:85px;font-size:11px;color:#333;font-weight:normal;width:60px;text-align:right">1.200</div>
<div class="t" style="left:999px;top:85px;font-size:11px;color:#333;font-weight:normal;">Stück</div>
<div class="t" style="left:1074px;top:85px;font-size:11px;color:#333;font-weight:normal;">22.07.2025 14...</div>
<div class="t" style="left:1168px;top:85px;font-size:11px;color:#333;font-weight:normal;">22.07.2025 14...</div>
<div class="t" style="left:1263px;top:85px;font-size:11px;color:#333;font-weight:normal;">22.07.2025 14...</div>
<div class="t" style="left:1359px;top:85px;font-size:11px;color:#333;font-weight:normal;">001</div>
<div style="position:absolute;left:1476px;top:86px;width:72px;height:18px;background:#1e4c9a"></div>
<div class="t" style="left:1476px;top:85px;font-size:11px;color:#fff;font-weight:normal;width:72px;text-align:center">100,00 %</div>
<div style="position:absolute;left:216px;top:105px;width:1333px;height:21px;background:#f4f4f4"></div>
<div style="position:absolute;left:316px;top:105px;width:1px;height:21px;background:#e0e0e0"></div>
<div style="position:absolute;left:391px;top:105px;width:1px;height:21px;background:#e0e0e0"></div>
<div style="position:absolute;left:492px;top:105px;width:1px;height:21px;background:#e0e0e0"></div>
<div style="position:absolute;left:567px;top:105px;width:1px;height:21px;background:#e0e0e0"></div>
<div style="position:absolute;left:727px;top:105px;width:1px;height:21px;background:#e0e0e0"></div>
<div style="position:absolute;left:927px;top:105px;width:1px;height:21px;background:#e0e0e0"></div>
<div style="position:absolute;left:993px;top:105px;width:1px;height:21px;background:#e0e0e0"></div>
<div style="position:absolute;left:1068px;top:105px;width:1px;height:21px;background:#e0e0e0"></div>
<div style="position:absolute;left:1162px;top:105px;width:1px;height:21px;background:#e0e0e0"></div>
<div style="position:absolute;left:1258px;top:105px;width:1px;height:21px;background:#e0e0e0"></div>
<div style="position:absolute;left:1353px;top:105px;width:1px;height:21px;background:#e0e0e0"></div>
<div style="position:absolute;left:1473px;top:105px;width:1px;height:21px;background:#e0e0e0"></div>
<div style="position:absolute;left:1549px;top:105px;width:1px;height:21px;background:#e0e0e0"></div>
<div class="t" style="left:222px;top:106px;font-size:11px;color:#333;font-weight:normal;">FA000669</div>
<svg style="position:absolute;left:318px;top:107px" width="18" height="18" viewBox="0 0 18 18"><circle cx="9" cy="9" r="7.8" fill="none" stroke="#7cc77c" stroke-width="1.4"/><path d="M5 9.2l2.8 2.8 5.2-5.2" fill="none" stroke="#44a844" stroke-width="2"/></svg>
<div class="t" style="left:397px;top:106px;font-size:11px;color:#333;font-weight:normal;">ABGS</div>
<div class="t" style="left:498px;top:106px;font-size:11px;color:#333;font-weight:normal;">Standard</div>
<div class="t" style="left:573px;top:106px;font-size:11px;color:#333;font-weight:normal;">Food-001</div>
<div class="t" style="left:733px;top:106px;font-size:11px;color:#333;font-weight:normal;">Burger Patty 180g</div>
<div class="t" style="left:927px;top:106px;font-size:11px;color:#333;font-weight:normal;width:60px;text-align:right">1.100</div>
<div class="t" style="left:999px;top:106px;font-size:11px;color:#333;font-weight:normal;">Stück</div>
<div class="t" style="left:1074px;top:106px;font-size:11px;color:#333;font-weight:normal;">12.08.2025 11...</div>
<div class="t" style="left:1168px;top:106px;font-size:11px;color:#333;font-weight:normal;">12.08.2025 11...</div>
<div class="t" style="left:1263px;top:106px;font-size:11px;color:#333;font-weight:normal;">12.08.2025 11...</div>
<div class="t" style="left:1359px;top:106px;font-size:11px;color:#333;font-weight:normal;">001</div>
<div style="position:absolute;left:1476px;top:107px;width:72px;height:18px;background:#1e4c9a"></div>
<div class="t" style="left:1476px;top:106px;font-size:11px;color:#fff;font-weight:normal;width:72px;text-align:center">100,00 %</div>
<div style="position:absolute;left:216px;top:126px;width:1333px;height:21px;background:#dcdcdc"></div>
<div style="position:absolute;left:316px;top:126px;width:1px;height:21px;background:#e4e4e4"></div>
<div style="position:absolute;left:391px;top:126px;width:1px;height:21px;background:#e4e4e4"></div>
<div style="position:absolute;left:492px;top:126px;width:1px;height:21px;background:#e4e4e4"></div>
<div style="position:absolute;left:567px;top:126px;width:1px;height:21px;background:#e4e4e4"></div>
<div style="position:absolute;left:727px;top:126px;width:1px;height:21px;background:#e4e4e4"></div>
<div style="position:absolute;left:927px;top:126px;width:1px;height:21px;background:#e4e4e4"></div>
<div style="position:absolute;left:993px;top:126px;width:1px;height:21px;background:#e4e4e4"></div>
<div style="position:absolute;left:1068px;top:126px;width:1px;height:21px;background:#e4e4e4"></div>
<div style="position:absolute;left:1162px;top:126px;width:1px;height:21px;background:#e4e4e4"></div>
<div style="position:absolute;left:1258px;top:126px;width:1px;height:21px;background:#e4e4e4"></div>
<div style="position:absolute;left:1353px;top:126px;width:1px;height:21px;background:#e4e4e4"></div>
<div style="position:absolute;left:1473px;top:126px;width:1px;height:21px;background:#e4e4e4"></div>
<div style="position:absolute;left:1549px;top:126px;width:1px;height:21px;background:#e4e4e4"></div>
<div class="t" style="left:222px;top:127px;font-size:11px;color:#333;font-weight:normal;">FA000719</div>
<svg style="position:absolute;left:318px;top:128px" width="18" height="18" viewBox="0 0 18 18"><circle cx="9" cy="9" r="7.8" fill="none" stroke="#7cc77c" stroke-width="1.4"/><path d="M5 9.2l2.8 2.8 5.2-5.2" fill="none" stroke="#44a844" stroke-width="2"/></svg>
<div class="t" style="left:397px;top:127px;font-size:11px;color:#333;font-weight:normal;">ABGS</div>
<div class="t" style="left:498px;top:127px;font-size:11px;color:#333;font-weight:normal;">Standard</div>
<div class="t" style="left:573px;top:127px;font-size:11px;color:#333;font-weight:normal;">Food-001</div>
<div class="t" style="left:733px;top:127px;font-size:11px;color:#333;font-weight:normal;">Burger Patty 180g</div>
<div class="t" style="left:927px;top:127px;font-size:11px;color:#333;font-weight:normal;width:60px;text-align:right">1.003</div>
<div class="t" style="left:999px;top:127px;font-size:11px;color:#333;font-weight:normal;">Stück</div>
<div class="t" style="left:1074px;top:127px;font-size:11px;color:#333;font-weight:normal;">27.08.2025 15...</div>
<div class="t" style="left:1168px;top:127px;font-size:11px;color:#333;font-weight:normal;">27.08.2025 15...</div>
<div class="t" style="left:1263px;top:127px;font-size:11px;color:#333;font-weight:normal;">27.08.2025 15...</div>
<div class="t" style="left:1359px;top:127px;font-size:11px;color:#333;font-weight:normal;">001</div>
<div style="position:absolute;left:1476px;top:128px;width:72px;height:18px;background:#1e4c9a"></div>
<div class="t" style="left:1476px;top:127px;font-size:11px;color:#fff;font-weight:normal;width:72px;text-align:center">100,00 %</div>
<div style="position:absolute;left:216px;top:147px;width:1333px;height:21px;background:#f4f4f4"></div>
<div style="position:absolute;left:316px;top:147px;width:1px;height:21px;background:#e0e0e0"></div>
<div style="position:absolute;left:391px;top:147px;width:1px;height:21px;background:#e0e0e0"></div>
<div style="position:absolute;left:492px;top:147px;width:1px;height:21px;background:#e0e0e0"></div>
<div style="position:absolute;left:567px;top:147px;width:1px;height:21px;background:#e0e0e0"></div>
<div style="position:absolute;left:727px;top:147px;width:1px;height:21px;background:#e0e0e0"></div>
<div style="position:absolute;left:927px;top:147px;width:1px;height:21px;background:#e0e0e0"></div>
<div style="position:absolute;left:993px;top:147px;width:1px;height:21px;background:#e0e0e0"></div>
<div style="position:absolute;left:1068px;top:147px;width:1px;height:21px;background:#e0e0e0"></div>
<div style="position:absolute;left:1162px;top:147px;width:1px;height:21px;background:#e0e0e0"></div>
<div style="position:absolute;left:1258px;top:147px;width:1px;height:21px;background:#e0e0e0"></div>
<div style="position:absolute;left:1353px;top:147px;width:1px;height:21px;background:#e0e0e0"></div>
<div style="position:absolute;left:1473px;top:147px;width:1px;height:21px;background:#e0e0e0"></div>
<div style="position:absolute;left:1549px;top:147px;width:1px;height:21px;background:#e0e0e0"></div>
<div class="t" style="left:222px;top:148px;font-size:11px;color:#333;font-weight:normal;">FA000720</div>
<svg style="position:absolute;left:318px;top:149px" width="18" height="18" viewBox="0 0 18 18"><circle cx="9" cy="9" r="7.8" fill="none" stroke="#7cc77c" stroke-width="1.4"/><path d="M5 9.2l2.8 2.8 5.2-5.2" fill="none" stroke="#44a844" stroke-width="2"/></svg>
<div class="t" style="left:397px;top:148px;font-size:11px;color:#333;font-weight:normal;">ABGS</div>
<div class="t" style="left:498px;top:148px;font-size:11px;color:#333;font-weight:normal;">Standard</div>
<div class="t" style="left:573px;top:148px;font-size:11px;color:#333;font-weight:normal;">Food-001</div>
<div class="t" style="left:733px;top:148px;font-size:11px;color:#333;font-weight:normal;">Burger Patty 180g</div>
<div class="t" style="left:927px;top:148px;font-size:11px;color:#333;font-weight:normal;width:60px;text-align:right">1.003</div>
<div class="t" style="left:999px;top:148px;font-size:11px;color:#333;font-weight:normal;">Stück</div>
<div class="t" style="left:1074px;top:148px;font-size:11px;color:#333;font-weight:normal;">27.08.2025 15...</div>
<div class="t" style="left:1168px;top:148px;font-size:11px;color:#333;font-weight:normal;">27.08.2025 16...</div>
<div class="t" style="left:1263px;top:148px;font-size:11px;color:#333;font-weight:normal;">27.08.2025 15...</div>
<div class="t" style="left:1359px;top:148px;font-size:11px;color:#333;font-weight:normal;">001</div>
<div style="position:absolute;left:1476px;top:149px;width:72px;height:18px;background:#1e4c9a"></div>
<div class="t" style="left:1476px;top:148px;font-size:11px;color:#fff;font-weight:normal;width:72px;text-align:center">100,00 %</div>
<div style="position:absolute;left:216px;top:168px;width:1333px;height:21px;background:#dcdcdc"></div>
<div style="position:absolute;left:316px;top:168px;width:1px;height:21px;background:#e4e4e4"></div>
<div style="position:absolute;left:391px;top:168px;width:1px;height:21px;background:#e4e4e4"></div>
<div style="position:absolute;left:492px;top:168px;width:1px;height:21px;background:#e4e4e4"></div>
<div style="position:absolute;left:567px;top:168px;width:1px;height:21px;background:#e4e4e4"></div>
<div style="position:absolute;left:727px;top:168px;width:1px;height:21px;background:#e4e4e4"></div>
<div style="position:absolute;left:927px;top:168px;width:1px;height:21px;background:#e4e4e4"></div>
<div style="position:absolute;left:993px;top:168px;width:1px;height:21px;background:#e4e4e4"></div>
<div style="position:absolute;left:1068px;top:168px;width:1px;height:21px;background:#e4e4e4"></div>
<div style="position:absolute;left:1162px;top:168px;width:1px;height:21px;background:#e4e4e4"></div>
<div style="position:absolute;left:1258px;top:168px;width:1px;height:21px;background:#e4e4e4"></div>
<div style="position:absolute;left:1353px;top:168px;width:1px;height:21px;background:#e4e4e4"></div>
<div style="position:absolute;left:1473px;top:168px;width:1px;height:21px;background:#e4e4e4"></div>
<div style="position:absolute;left:1549px;top:168px;width:1px;height:21px;background:#e4e4e4"></div>
<div class="t" style="left:222px;top:169px;font-size:11px;color:#333;font-weight:normal;">FA000722</div>
<svg style="position:absolute;left:318px;top:170px" width="18" height="18" viewBox="0 0 18 18"><circle cx="9" cy="9" r="7.8" fill="none" stroke="#7cc77c" stroke-width="1.4"/><path d="M5 9.2l2.8 2.8 5.2-5.2" fill="none" stroke="#44a844" stroke-width="2"/></svg>
<div class="t" style="left:397px;top:169px;font-size:11px;color:#333;font-weight:normal;">ABGS</div>
<div class="t" style="left:498px;top:169px;font-size:11px;color:#333;font-weight:normal;">Standard</div>
<div class="t" style="left:573px;top:169px;font-size:11px;color:#333;font-weight:normal;">Food-001</div>
<div class="t" style="left:733px;top:169px;font-size:11px;color:#333;font-weight:normal;">Burger Patty 180g</div>
<div class="t" style="left:927px;top:169px;font-size:11px;color:#333;font-weight:normal;width:60px;text-align:right">1.003</div>
<div class="t" style="left:999px;top:169px;font-size:11px;color:#333;font-weight:normal;">Stück</div>
<div class="t" style="left:1074px;top:169px;font-size:11px;color:#333;font-weight:normal;">27.08.2025 16...</div>
<div class="t" style="left:1168px;top:169px;font-size:11px;color:#333;font-weight:normal;">27.08.2025 16...</div>
<div class="t" style="left:1263px;top:169px;font-size:11px;color:#333;font-weight:normal;">27.08.2025 16...</div>
<div class="t" style="left:1359px;top:169px;font-size:11px;color:#333;font-weight:normal;">001</div>
<div style="position:absolute;left:1476px;top:170px;width:72px;height:18px;background:#1e4c9a"></div>
<div class="t" style="left:1476px;top:169px;font-size:11px;color:#fff;font-weight:normal;width:72px;text-align:center">100,00 %</div>
<div style="position:absolute;left:216px;top:189px;width:1333px;height:21px;background:#f4f4f4"></div>
<div style="position:absolute;left:316px;top:189px;width:1px;height:21px;background:#e0e0e0"></div>
<div style="position:absolute;left:391px;top:189px;width:1px;height:21px;background:#e0e0e0"></div>
<div style="position:absolute;left:492px;top:189px;width:1px;height:21px;background:#e0e0e0"></div>
<div style="position:absolute;left:567px;top:189px;width:1px;height:21px;background:#e0e0e0"></div>
<div style="position:absolute;left:727px;top:189px;width:1px;height:21px;background:#e0e0e0"></div>
<div style="position:absolute;left:927px;top:189px;width:1px;height:21px;background:#e0e0e0"></div>
<div style="position:absolute;left:993px;top:189px;width:1px;height:21px;background:#e0e0e0"></div>
<div style="position:absolute;left:1068px;top:189px;width:1px;height:21px;background:#e0e0e0"></div>
<div style="position:absolute;left:1162px;top:189px;width:1px;height:21px;background:#e0e0e0"></div>
<div style="position:absolute;left:1258px;top:189px;width:1px;height:21px;background:#e0e0e0"></div>
<div style="position:absolute;left:1353px;top:189px;width:1px;height:21px;background:#e0e0e0"></div>
<div style="position:absolute;left:1473px;top:189px;width:1px;height:21px;background:#e0e0e0"></div>
<div style="position:absolute;left:1549px;top:189px;width:1px;height:21px;background:#e0e0e0"></div>
<div class="t" style="left:222px;top:190px;font-size:11px;color:#333;font-weight:normal;">FA000721</div>
<svg style="position:absolute;left:318px;top:191px" width="18" height="18" viewBox="0 0 18 18"><circle cx="9" cy="9" r="7.8" fill="none" stroke="#7cc77c" stroke-width="1.4"/><path d="M5 9.2l2.8 2.8 5.2-5.2" fill="none" stroke="#44a844" stroke-width="2"/></svg>
<div class="t" style="left:397px;top:190px;font-size:11px;color:#333;font-weight:normal;">ABGS</div>
<div class="t" style="left:498px;top:190px;font-size:11px;color:#333;font-weight:normal;">Standard</div>
<div class="t" style="left:573px;top:190px;font-size:11px;color:#333;font-weight:normal;">Food-001</div>
<div class="t" style="left:733px;top:190px;font-size:11px;color:#333;font-weight:normal;">Burger Patty 180g</div>
<div class="t" style="left:927px;top:190px;font-size:11px;color:#333;font-weight:normal;width:60px;text-align:right">1.003</div>
<div class="t" style="left:999px;top:190px;font-size:11px;color:#333;font-weight:normal;">Stück</div>
<div class="t" style="left:1074px;top:190px;font-size:11px;color:#333;font-weight:normal;">27.08.2025 16...</div>
<div class="t" style="left:1168px;top:190px;font-size:11px;color:#333;font-weight:normal;">27.08.2025 16...</div>
<div class="t" style="left:1263px;top:190px;font-size:11px;color:#333;font-weight:normal;">27.08.2025 16...</div>
<div class="t" style="left:1359px;top:190px;font-size:11px;color:#333;font-weight:normal;">001</div>
<div style="position:absolute;left:1476px;top:191px;width:72px;height:18px;background:#1e4c9a"></div>
<div class="t" style="left:1476px;top:190px;font-size:11px;color:#fff;font-weight:normal;width:72px;text-align:center">100,00 %</div>
<div style="position:absolute;left:216px;top:210px;width:1333px;height:21px;background:#dcdcdc"></div>
<div style="position:absolute;left:316px;top:210px;width:1px;height:21px;background:#e4e4e4"></div>
<div style="position:absolute;left:391px;top:210px;width:1px;height:21px;background:#e4e4e4"></div>
<div style="position:absolute;left:492px;top:210px;width:1px;height:21px;background:#e4e4e4"></div>
<div style="position:absolute;left:567px;top:210px;width:1px;height:21px;background:#e4e4e4"></div>
<div style="position:absolute;left:727px;top:210px;width:1px;height:21px;background:#e4e4e4"></div>
<div style="position:absolute;left:927px;top:210px;width:1px;height:21px;background:#e4e4e4"></div>
<div style="position:absolute;left:993px;top:210px;width:1px;height:21px;background:#e4e4e4"></div>
<div style="position:absolute;left:1068px;top:210px;width:1px;height:21px;background:#e4e4e4"></div>
<div style="position:absolute;left:1162px;top:210px;width:1px;height:21px;background:#e4e4e4"></div>
<div style="position:absolute;left:1258px;top:210px;width:1px;height:21px;background:#e4e4e4"></div>
<div style="position:absolute;left:1353px;top:210px;width:1px;height:21px;background:#e4e4e4"></div>
<div style="position:absolute;left:1473px;top:210px;width:1px;height:21px;background:#e4e4e4"></div>
<div style="position:absolute;left:1549px;top:210px;width:1px;height:21px;background:#e4e4e4"></div>
<div class="t" style="left:222px;top:211px;font-size:11px;color:#333;font-weight:normal;">FA000718</div>
<svg style="position:absolute;left:318px;top:212px" width="18" height="18" viewBox="0 0 18 18"><circle cx="9" cy="9" r="7.8" fill="none" stroke="#7cc77c" stroke-width="1.4"/><path d="M5 9.2l2.8 2.8 5.2-5.2" fill="none" stroke="#44a844" stroke-width="2"/></svg>
<div class="t" style="left:397px;top:211px;font-size:11px;color:#333;font-weight:normal;">ABGS</div>
<div class="t" style="left:498px;top:211px;font-size:11px;color:#333;font-weight:normal;">Standard</div>
<div class="t" style="left:573px;top:211px;font-size:11px;color:#333;font-weight:normal;">Food-001</div>
<div class="t" style="left:733px;top:211px;font-size:11px;color:#333;font-weight:normal;">Burger Patty 180g</div>
<div class="t" style="left:927px;top:211px;font-size:11px;color:#333;font-weight:normal;width:60px;text-align:right">1.002</div>
<div class="t" style="left:999px;top:211px;font-size:11px;color:#333;font-weight:normal;">Stück</div>
<div class="t" style="left:1074px;top:211px;font-size:11px;color:#333;font-weight:normal;">27.08.2025 15...</div>
<div class="t" style="left:1168px;top:211px;font-size:11px;color:#333;font-weight:normal;">27.08.2025 15...</div>
<div class="t" style="left:1263px;top:211px;font-size:11px;color:#333;font-weight:normal;">27.08.2025 15...</div>
<div class="t" style="left:1359px;top:211px;font-size:11px;color:#333;font-weight:normal;">001</div>
<div style="position:absolute;left:1476px;top:212px;width:72px;height:18px;background:#1e4c9a"></div>
<div class="t" style="left:1476px;top:211px;font-size:11px;color:#fff;font-weight:normal;width:72px;text-align:center">100,00 %</div>
<div style="position:absolute;left:216px;top:231px;width:1333px;height:21px;background:#f4f4f4"></div>
<div style="position:absolute;left:316px;top:231px;width:1px;height:21px;background:#e0e0e0"></div>
<div style="position:absolute;left:391px;top:231px;width:1px;height:21px;background:#e0e0e0"></div>
<div style="position:absolute;left:492px;top:231px;width:1px;height:21px;background:#e0e0e0"></div>
<div style="position:absolute;left:567px;top:231px;width:1px;height:21px;background:#e0e0e0"></div>
<div style="position:absolute;left:727px;top:231px;width:1px;height:21px;background:#e0e0e0"></div>
<div style="position:absolute;left:927px;top:231px;width:1px;height:21px;background:#e0e0e0"></div>
<div style="position:absolute;left:993px;top:231px;width:1px;height:21px;background:#e0e0e0"></div>
<div style="position:absolute;left:1068px;top:231px;width:1px;height:21px;background:#e0e0e0"></div>
<div style="position:absolute;left:1162px;top:231px;width:1px;height:21px;background:#e0e0e0"></div>
<div style="position:absolute;left:1258px;top:231px;width:1px;height:21px;background:#e0e0e0"></div>
<div style="position:absolute;left:1353px;top:231px;width:1px;height:21px;background:#e0e0e0"></div>
<div style="position:absolute;left:1473px;top:231px;width:1px;height:21px;background:#e0e0e0"></div>
<div style="position:absolute;left:1549px;top:231px;width:1px;height:21px;background:#e0e0e0"></div>
<div class="t" style="left:222px;top:232px;font-size:11px;color:#333;font-weight:normal;">FA000716</div>
<svg style="position:absolute;left:318px;top:233px" width="18" height="18" viewBox="0 0 18 18"><circle cx="9" cy="9" r="7.8" fill="none" stroke="#7cc77c" stroke-width="1.4"/><path d="M5 9.2l2.8 2.8 5.2-5.2" fill="none" stroke="#44a844" stroke-width="2"/></svg>
<div class="t" style="left:397px;top:232px;font-size:11px;color:#333;font-weight:normal;">ABGS</div>
<div class="t" style="left:498px;top:232px;font-size:11px;color:#333;font-weight:normal;">Standard</div>
<div class="t" style="left:573px;top:232px;font-size:11px;color:#333;font-weight:normal;">Food-001</div>
<div class="t" style="left:733px;top:232px;font-size:11px;color:#333;font-weight:normal;">Burger Patty 180g</div>
<div class="t" style="left:927px;top:232px;font-size:11px;color:#333;font-weight:normal;width:60px;text-align:right">1.001</div>
<div class="t" style="left:999px;top:232px;font-size:11px;color:#333;font-weight:normal;">Stück</div>
<div class="t" style="left:1074px;top:232px;font-size:11px;color:#333;font-weight:normal;">27.08.2025 14...</div>
<div class="t" style="left:1168px;top:232px;font-size:11px;color:#333;font-weight:normal;">27.08.2025 14...</div>
<div class="t" style="left:1263px;top:232px;font-size:11px;color:#333;font-weight:normal;">27.08.2025 14...</div>
<div class="t" style="left:1359px;top:232px;font-size:11px;color:#333;font-weight:normal;">001</div>
<div style="position:absolute;left:1476px;top:233px;width:72px;height:18px;background:#1e4c9a"></div>
<div class="t" style="left:1476px;top:232px;font-size:11px;color:#fff;font-weight:normal;width:72px;text-align:center">100,00 %</div>
<div style="position:absolute;left:216px;top:252px;width:1333px;height:21px;background:#dcdcdc"></div>
<div style="position:absolute;left:316px;top:252px;width:1px;height:21px;background:#e4e4e4"></div>
<div style="position:absolute;left:391px;top:252px;width:1px;height:21px;background:#e4e4e4"></div>
<div style="position:absolute;left:492px;top:252px;width:1px;height:21px;background:#e4e4e4"></div>
<div style="position:absolute;left:567px;top:252px;width:1px;height:21px;background:#e4e4e4"></div>
<div style="position:absolute;left:727px;top:252px;width:1px;height:21px;background:#e4e4e4"></div>
<div style="position:absolute;left:927px;top:252px;width:1px;height:21px;background:#e4e4e4"></div>
<div style="position:absolute;left:993px;top:252px;width:1px;height:21px;background:#e4e4e4"></div>
<div style="position:absolute;left:1068px;top:252px;width:1px;height:21px;background:#e4e4e4"></div>
<div style="position:absolute;left:1162px;top:252px;width:1px;height:21px;background:#e4e4e4"></div>
<div style="position:absolute;left:1258px;top:252px;width:1px;height:21px;background:#e4e4e4"></div>
<div style="position:absolute;left:1353px;top:252px;width:1px;height:21px;background:#e4e4e4"></div>
<div style="position:absolute;left:1473px;top:252px;width:1px;height:21px;background:#e4e4e4"></div>
<div style="position:absolute;left:1549px;top:252px;width:1px;height:21px;background:#e4e4e4"></div>
<div class="t" style="left:222px;top:253px;font-size:11px;color:#333;font-weight:normal;">FA000717</div>
<svg style="position:absolute;left:318px;top:254px" width="18" height="18" viewBox="0 0 18 18"><circle cx="9" cy="9" r="7.8" fill="none" stroke="#7cc77c" stroke-width="1.4"/><path d="M5 9.2l2.8 2.8 5.2-5.2" fill="none" stroke="#44a844" stroke-width="2"/></svg>
<div class="t" style="left:397px;top:253px;font-size:11px;color:#333;font-weight:normal;">ABGS</div>
<div class="t" style="left:498px;top:253px;font-size:11px;color:#333;font-weight:normal;">Standard</div>
<div class="t" style="left:573px;top:253px;font-size:11px;color:#333;font-weight:normal;">Food-001</div>
<div class="t" style="left:733px;top:253px;font-size:11px;color:#333;font-weight:normal;">Burger Patty 180g</div>
<div class="t" style="left:927px;top:253px;font-size:11px;color:#333;font-weight:normal;width:60px;text-align:right">1.001</div>
<div class="t" style="left:999px;top:253px;font-size:11px;color:#333;font-weight:normal;">Stück</div>
<div class="t" style="left:1074px;top:253px;font-size:11px;color:#333;font-weight:normal;">27.08.2025 14...</div>
<div class="t" style="left:1168px;top:253px;font-size:11px;color:#333;font-weight:normal;">27.08.2025 15...</div>
<div class="t" style="left:1263px;top:253px;font-size:11px;color:#333;font-weight:normal;">27.08.2025 14...</div>
<div class="t" style="left:1359px;top:253px;font-size:11px;color:#333;font-weight:normal;">001</div>
<div style="position:absolute;left:1476px;top:254px;width:72px;height:18px;background:#1e4c9a"></div>
<div class="t" style="left:1476px;top:253px;font-size:11px;color:#fff;font-weight:normal;width:72px;text-align:center">100,00 %</div>
<div style="position:absolute;left:216px;top:273px;width:1333px;height:21px;background:#f4f4f4"></div>
<div style="position:absolute;left:316px;top:273px;width:1px;height:21px;background:#e0e0e0"></div>
<div style="position:absolute;left:391px;top:273px;width:1px;height:21px;background:#e0e0e0"></div>
<div style="position:absolute;left:492px;top:273px;width:1px;height:21px;background:#e0e0e0"></div>
<div style="position:absolute;left:567px;top:273px;width:1px;height:21px;background:#e0e0e0"></div>
<div style="position:absolute;left:727px;top:273px;width:1px;height:21px;background:#e0e0e0"></div>
<div style="position:absolute;left:927px;top:273px;width:1px;height:21px;background:#e0e0e0"></div>
<div style="position:absolute;left:993px;top:273px;width:1px;height:21px;background:#e0e0e0"></div>
<div style="position:absolute;left:1068px;top:273px;width:1px;height:21px;background:#e0e0e0"></div>
<div style="position:absolute;left:1162px;top:273px;width:1px;height:21px;background:#e0e0e0"></div>
<div style="position:absolute;left:1258px;top:273px;width:1px;height:21px;background:#e0e0e0"></div>
<div style="position:absolute;left:1353px;top:273px;width:1px;height:21px;background:#e0e0e0"></div>
<div style="position:absolute;left:1473px;top:273px;width:1px;height:21px;background:#e0e0e0"></div>
<div style="position:absolute;left:1549px;top:273px;width:1px;height:21px;background:#e0e0e0"></div>
<div class="t" style="left:222px;top:274px;font-size:11px;color:#333;font-weight:normal;">FA000714</div>
<svg style="position:absolute;left:318px;top:275px" width="18" height="18" viewBox="0 0 18 18"><circle cx="9" cy="9" r="7.8" fill="none" stroke="#7cc77c" stroke-width="1.4"/><path d="M5 9.2l2.8 2.8 5.2-5.2" fill="none" stroke="#44a844" stroke-width="2"/></svg>
<div class="t" style="left:397px;top:274px;font-size:11px;color:#333;font-weight:normal;">ABGS</div>
<div class="t" style="left:498px;top:274px;font-size:11px;color:#333;font-weight:normal;">Standard</div>
<div class="t" style="left:573px;top:274px;font-size:11px;color:#333;font-weight:normal;">Food-001</div>
<div class="t" style="left:733px;top:274px;font-size:11px;color:#333;font-weight:normal;">Burger Patty 180g</div>
<div class="t" style="left:927px;top:274px;font-size:11px;color:#333;font-weight:normal;width:60px;text-align:right">1.001</div>
<div class="t" style="left:999px;top:274px;font-size:11px;color:#333;font-weight:normal;">Stück</div>
<div class="t" style="left:1074px;top:274px;font-size:11px;color:#333;font-weight:normal;">27.08.2025 14...</div>
<div class="t" style="left:1168px;top:274px;font-size:11px;color:#333;font-weight:normal;">27.08.2025 14...</div>
<div class="t" style="left:1263px;top:274px;font-size:11px;color:#333;font-weight:normal;">27.08.2025 14...</div>
<div class="t" style="left:1359px;top:274px;font-size:11px;color:#333;font-weight:normal;">001</div>
<div style="position:absolute;left:1476px;top:275px;width:72px;height:18px;background:#1e4c9a"></div>
<div class="t" style="left:1476px;top:274px;font-size:11px;color:#fff;font-weight:normal;width:72px;text-align:center">100,00 %</div>
<div style="position:absolute;left:216px;top:294px;width:1333px;height:21px;background:#dcdcdc"></div>
<div style="position:absolute;left:316px;top:294px;width:1px;height:21px;background:#e4e4e4"></div>
<div style="position:absolute;left:391px;top:294px;width:1px;height:21px;background:#e4e4e4"></div>
<div style="position:absolute;left:492px;top:294px;width:1px;height:21px;background:#e4e4e4"></div>
<div style="position:absolute;left:567px;top:294px;width:1px;height:21px;background:#e4e4e4"></div>
<div style="position:absolute;left:727px;top:294px;width:1px;height:21px;background:#e4e4e4"></div>
<div style="position:absolute;left:927px;top:294px;width:1px;height:21px;background:#e4e4e4"></div>
<div style="position:absolute;left:993px;top:294px;width:1px;height:21px;background:#e4e4e4"></div>
<div style="position:absolute;left:1068px;top:294px;width:1px;height:21px;background:#e4e4e4"></div>
<div style="position:absolute;left:1162px;top:294px;width:1px;height:21px;background:#e4e4e4"></div>
<div style="position:absolute;left:1258px;top:294px;width:1px;height:21px;background:#e4e4e4"></div>
<div style="position:absolute;left:1353px;top:294px;width:1px;height:21px;background:#e4e4e4"></div>
<div style="position:absolute;left:1473px;top:294px;width:1px;height:21px;background:#e4e4e4"></div>
<div style="position:absolute;left:1549px;top:294px;width:1px;height:21px;background:#e4e4e4"></div>
<div class="t" style="left:222px;top:295px;font-size:11px;color:#333;font-weight:normal;">FA000715</div>
<svg style="position:absolute;left:316px;top:296px" width="44" height="18" viewBox="0 0 44 18"><rect x="6.5" y="1.5" width="8" height="15" rx="2" fill="#fff" stroke="#555" stroke-width="1.4"/><circle cx="10.5" cy="12.5" r="2" fill="#3cb03c"/><rect x="9.8" y="4" width="1.4" height="1.4" fill="#555"/><rect x="9.8" y="7" width="1.4" height="1.4" fill="#555"/><g transform="translate(30.5 10.5)" fill="none" stroke="#666" stroke-width="1.3" stroke-linejoin="round"><path d="M-1.05 -5.30L-1.09 -7.32L1.09 -7.32L1.05 -5.30L3.00 -4.49L4.41 -5.94L5.94 -4.41L4.49 -3.00L5.30 -1.05L7.32 -1.09L7.32 1.09L5.30 1.05L4.49 3.00L5.94 4.41L4.41 5.94L3.00 4.49L1.05 5.30L1.09 7.32L-1.09 7.32L-1.05 5.30L-3.00 4.49L-4.41 5.94L-5.94 4.41L-4.49 3.00L-5.30 1.05L-7.32 1.09L-7.32 -1.09L-5.30 -1.05L-4.49 -3.00L-5.94 -4.41L-4.41 -5.94L-3.00 -4.49Z"/><path d="M2.5 2A3 3 0 0 1 -2.5 -1.5" stroke-width="1.1"/></g><circle cx="36.5" cy="5" r="4.8" fill="#3cb03c" stroke="#fff" stroke-width="1.2"/><path d="M34.3 5.2l1.6 1.6 2.8-2.9" fill="none" stroke="#fff" stroke-width="1.3"/></svg>
<div class="t" style="left:397px;top:295px;font-size:11px;color:#333;font-weight:normal;">FREI PBDT</div>
<div class="t" style="left:498px;top:295px;font-size:11px;color:#333;font-weight:normal;">Standard</div>
<div class="t" style="left:573px;top:295px;font-size:11px;color:#333;font-weight:normal;">Food-001</div>
<div class="t" style="left:733px;top:295px;font-size:11px;color:#333;font-weight:normal;">Burger Patty 180g</div>
<div class="t" style="left:927px;top:295px;font-size:11px;color:#333;font-weight:normal;width:60px;text-align:right">1.001</div>
<div class="t" style="left:999px;top:295px;font-size:11px;color:#333;font-weight:normal;">Stück</div>
<div class="t" style="left:1074px;top:295px;font-size:11px;color:#333;font-weight:normal;">27.08.2025 14...</div>
<div class="t" style="left:1168px;top:295px;font-size:11px;color:#333;font-weight:normal;">27.08.2025 14...</div>
<div class="t" style="left:1263px;top:295px;font-size:11px;color:#333;font-weight:normal;">27.08.2025 14...</div>
<div class="t" style="left:1359px;top:295px;font-size:11px;color:#333;font-weight:normal;">001</div>
<div style="position:absolute;left:1476px;top:296px;width:72px;height:18px;background:#1e4c9a"></div>
<div class="t" style="left:1476px;top:295px;font-size:11px;color:#fff;font-weight:normal;width:72px;text-align:center">100,00 %</div>
<div style="position:absolute;left:216px;top:315px;width:1333px;height:21px;background:#f4f4f4"></div>
<div style="position:absolute;left:316px;top:315px;width:1px;height:21px;background:#e0e0e0"></div>
<div style="position:absolute;left:391px;top:315px;width:1px;height:21px;background:#e0e0e0"></div>
<div style="position:absolute;left:492px;top:315px;width:1px;height:21px;background:#e0e0e0"></div>
<div style="position:absolute;left:567px;top:315px;width:1px;height:21px;background:#e0e0e0"></div>
<div style="position:absolute;left:727px;top:315px;width:1px;height:21px;background:#e0e0e0"></div>
<div style="position:absolute;left:927px;top:315px;width:1px;height:21px;background:#e0e0e0"></div>
<div style="position:absolute;left:993px;top:315px;width:1px;height:21px;background:#e0e0e0"></div>
<div style="position:absolute;left:1068px;top:315px;width:1px;height:21px;background:#e0e0e0"></div>
<div style="position:absolute;left:1162px;top:315px;width:1px;height:21px;background:#e0e0e0"></div>
<div style="position:absolute;left:1258px;top:315px;width:1px;height:21px;background:#e0e0e0"></div>
<div style="position:absolute;left:1353px;top:315px;width:1px;height:21px;background:#e0e0e0"></div>
<div style="position:absolute;left:1473px;top:315px;width:1px;height:21px;background:#e0e0e0"></div>
<div style="position:absolute;left:1549px;top:315px;width:1px;height:21px;background:#e0e0e0"></div>
<div class="t" style="left:222px;top:316px;font-size:11px;color:#333;font-weight:normal;">FA000712</div>
<svg style="position:absolute;left:316px;top:317px" width="44" height="18" viewBox="0 0 44 18"><rect x="6.5" y="1.5" width="8" height="15" rx="2" fill="#fff" stroke="#555" stroke-width="1.4"/><circle cx="10.5" cy="12.5" r="2" fill="#3cb03c"/><rect x="9.8" y="4" width="1.4" height="1.4" fill="#555"/><rect x="9.8" y="7" width="1.4" height="1.4" fill="#555"/><g transform="translate(30.5 10.5)" fill="none" stroke="#666" stroke-width="1.3" stroke-linejoin="round"><path d="M-1.05 -5.30L-1.09 -7.32L1.09 -7.32L1.05 -5.30L3.00 -4.49L4.41 -5.94L5.94 -4.41L4.49 -3.00L5.30 -1.05L7.32 -1.09L7.32 1.09L5.30 1.05L4.49 3.00L5.94 4.41L4.41 5.94L3.00 4.49L1.05 5.30L1.09 7.32L-1.09 7.32L-1.05 5.30L-3.00 4.49L-4.41 5.94L-5.94 4.41L-4.49 3.00L-5.30 1.05L-7.32 1.09L-7.32 -1.09L-5.30 -1.05L-4.49 -3.00L-5.94 -4.41L-4.41 -5.94L-3.00 -4.49Z"/><path d="M2.5 2A3 3 0 0 1 -2.5 -1.5" stroke-width="1.1"/></g><circle cx="36.5" cy="5" r="4.8" fill="#3cb03c" stroke="#fff" stroke-width="1.2"/><path d="M34.3 5.2l1.6 1.6 2.8-2.9" fill="none" stroke="#fff" stroke-width="1.3"/></svg>
<div class="t" style="left:397px;top:316px;font-size:11px;color:#333;font-weight:normal;">FREI PBDT</div>
<div class="t" style="left:498px;top:316px;font-size:11px;color:#333;font-weight:normal;">Standard</div>
<div class="t" style="left:573px;top:316px;font-size:11px;color:#333;font-weight:normal;">Food-001</div>
<div class="t" style="left:733px;top:316px;font-size:11px;color:#333;font-weight:normal;">Burger Patty 180g</div>
<div class="t" style="left:927px;top:316px;font-size:11px;color:#333;font-weight:normal;width:60px;text-align:right">1.001</div>
<div class="t" style="left:999px;top:316px;font-size:11px;color:#333;font-weight:normal;">Stück</div>
<div class="t" style="left:1074px;top:316px;font-size:11px;color:#333;font-weight:normal;">27.08.2025 14...</div>
<div class="t" style="left:1168px;top:316px;font-size:11px;color:#333;font-weight:normal;">27.08.2025 14...</div>
<div class="t" style="left:1263px;top:316px;font-size:11px;color:#333;font-weight:normal;">27.08.2025 14...</div>
<div class="t" style="left:1359px;top:316px;font-size:11px;color:#333;font-weight:normal;">001</div>
<div style="position:absolute;left:1476px;top:317px;width:72px;height:18px;background:#1e4c9a"></div>
<div class="t" style="left:1476px;top:316px;font-size:11px;color:#fff;font-weight:normal;width:72px;text-align:center">100,00 %</div>
<div style="position:absolute;left:216px;top:336px;width:1333px;height:21px;background:#dcdcdc"></div>
<div style="position:absolute;left:316px;top:336px;width:1px;height:21px;background:#e4e4e4"></div>
<div style="position:absolute;left:391px;top:336px;width:1px;height:21px;background:#e4e4e4"></div>
<div style="position:absolute;left:492px;top:336px;width:1px;height:21px;background:#e4e4e4"></div>
<div style="position:absolute;left:567px;top:336px;width:1px;height:21px;background:#e4e4e4"></div>
<div style="position:absolute;left:727px;top:336px;width:1px;height:21px;background:#e4e4e4"></div>
<div style="position:absolute;left:927px;top:336px;width:1px;height:21px;background:#e4e4e4"></div>
<div style="position:absolute;left:993px;top:336px;width:1px;height:21px;background:#e4e4e4"></div>
<div style="position:absolute;left:1068px;top:336px;width:1px;height:21px;background:#e4e4e4"></div>
<div style="position:absolute;left:1162px;top:336px;width:1px;height:21px;background:#e4e4e4"></div>
<div style="position:absolute;left:1258px;top:336px;width:1px;height:21px;background:#e4e4e4"></div>
<div style="position:absolute;left:1353px;top:336px;width:1px;height:21px;background:#e4e4e4"></div>
<div style="position:absolute;left:1473px;top:336px;width:1px;height:21px;background:#e4e4e4"></div>
<div style="position:absolute;left:1549px;top:336px;width:1px;height:21px;background:#e4e4e4"></div>
<div class="t" style="left:222px;top:337px;font-size:11px;color:#333;font-weight:normal;">FA000713</div>
<svg style="position:absolute;left:316px;top:338px" width="44" height="18" viewBox="0 0 44 18"><rect x="6.5" y="1.5" width="8" height="15" rx="2" fill="#fff" stroke="#555" stroke-width="1.4"/><circle cx="10.5" cy="12.5" r="2" fill="#3cb03c"/><rect x="9.8" y="4" width="1.4" height="1.4" fill="#555"/><rect x="9.8" y="7" width="1.4" height="1.4" fill="#555"/><g transform="translate(30.5 10.5)" fill="none" stroke="#666" stroke-width="1.3" stroke-linejoin="round"><path d="M-1.05 -5.30L-1.09 -7.32L1.09 -7.32L1.05 -5.30L3.00 -4.49L4.41 -5.94L5.94 -4.41L4.49 -3.00L5.30 -1.05L7.32 -1.09L7.32 1.09L5.30 1.05L4.49 3.00L5.94 4.41L4.41 5.94L3.00 4.49L1.05 5.30L1.09 7.32L-1.09 7.32L-1.05 5.30L-3.00 4.49L-4.41 5.94L-5.94 4.41L-4.49 3.00L-5.30 1.05L-7.32 1.09L-7.32 -1.09L-5.30 -1.05L-4.49 -3.00L-5.94 -4.41L-4.41 -5.94L-3.00 -4.49Z"/><path d="M2.5 2A3 3 0 0 1 -2.5 -1.5" stroke-width="1.1"/></g><circle cx="36.5" cy="5" r="4.8" fill="#3cb03c" stroke="#fff" stroke-width="1.2"/><path d="M34.3 5.2l1.6 1.6 2.8-2.9" fill="none" stroke="#fff" stroke-width="1.3"/></svg>
<div class="t" style="left:397px;top:337px;font-size:11px;color:#333;font-weight:normal;">FREI PBDT</div>
<div class="t" style="left:498px;top:337px;font-size:11px;color:#333;font-weight:normal;">Standard</div>
<div class="t" style="left:573px;top:337px;font-size:11px;color:#333;font-weight:normal;">Food-001</div>
<div class="t" style="left:733px;top:337px;font-size:11px;color:#333;font-weight:normal;">Burger Patty 180g</div>
<div class="t" style="left:927px;top:337px;font-size:11px;color:#333;font-weight:normal;width:60px;text-align:right">1.001</div>
<div class="t" style="left:999px;top:337px;font-size:11px;color:#333;font-weight:normal;">Stück</div>
<div class="t" style="left:1074px;top:337px;font-size:11px;color:#333;font-weight:normal;">27.08.2025 14...</div>
<div class="t" style="left:1168px;top:337px;font-size:11px;color:#333;font-weight:normal;">27.08.2025 14...</div>
<div class="t" style="left:1263px;top:337px;font-size:11px;color:#333;font-weight:normal;">27.08.2025 14...</div>
<div class="t" style="left:1359px;top:337px;font-size:11px;color:#333;font-weight:normal;">001</div>
<div style="position:absolute;left:1476px;top:338px;width:72px;height:18px;background:#1e4c9a"></div>
<div class="t" style="left:1476px;top:337px;font-size:11px;color:#fff;font-weight:normal;width:72px;text-align:center">100,00 %</div>
<div style="position:absolute;left:216px;top:357px;width:1333px;height:21px;background:#f4f4f4"></div>
<div style="position:absolute;left:316px;top:357px;width:1px;height:21px;background:#e0e0e0"></div>
<div style="position:absolute;left:391px;top:357px;width:1px;height:21px;background:#e0e0e0"></div>
<div style="position:absolute;left:492px;top:357px;width:1px;height:21px;background:#e0e0e0"></div>
<div style="position:absolute;left:567px;top:357px;width:1px;height:21px;background:#e0e0e0"></div>
<div style="position:absolute;left:727px;top:357px;width:1px;height:21px;background:#e0e0e0"></div>
<div style="position:absolute;left:927px;top:357px;width:1px;height:21px;background:#e0e0e0"></div>
<div style="position:absolute;left:993px;top:357px;width:1px;height:21px;background:#e0e0e0"></div>
<div style="position:absolute;left:1068px;top:357px;width:1px;height:21px;background:#e0e0e0"></div>
<div style="position:absolute;left:1162px;top:357px;width:1px;height:21px;background:#e0e0e0"></div>
<div style="position:absolute;left:1258px;top:357px;width:1px;height:21px;background:#e0e0e0"></div>
<div style="position:absolute;left:1353px;top:357px;width:1px;height:21px;background:#e0e0e0"></div>
<div style="position:absolute;left:1473px;top:357px;width:1px;height:21px;background:#e0e0e0"></div>
<div style="position:absolute;left:1549px;top:357px;width:1px;height:21px;background:#e0e0e0"></div>
<div class="t" style="left:222px;top:358px;font-size:11px;color:#333;font-weight:normal;">FA000710</div>
<svg style="position:absolute;left:316px;top:359px" width="44" height="18" viewBox="0 0 44 18"><rect x="6.5" y="1.5" width="8" height="15" rx="2" fill="#fff" stroke="#555" stroke-width="1.4"/><circle cx="10.5" cy="12.5" r="2" fill="#3cb03c"/><rect x="9.8" y="4" width="1.4" height="1.4" fill="#555"/><rect x="9.8" y="7" width="1.4" height="1.4" fill="#555"/><g transform="translate(30.5 10.5)" fill="none" stroke="#666" stroke-width="1.3" stroke-linejoin="round"><path d="M-1.05 -5.30L-1.09 -7.32L1.09 -7.32L1.05 -5.30L3.00 -4.49L4.41 -5.94L5.94 -4.41L4.49 -3.00L5.30 -1.05L7.32 -1.09L7.32 1.09L5.30 1.05L4.49 3.00L5.94 4.41L4.41 5.94L3.00 4.49L1.05 5.30L1.09 7.32L-1.09 7.32L-1.05 5.30L-3.00 4.49L-4.41 5.94L-5.94 4.41L-4.49 3.00L-5.30 1.05L-7.32 1.09L-7.32 -1.09L-5.30 -1.05L-4.49 -3.00L-5.94 -4.41L-4.41 -5.94L-3.00 -4.49Z"/><path d="M2.5 2A3 3 0 0 1 -2.5 -1.5" stroke-width="1.1"/></g><circle cx="36.5" cy="5" r="4.8" fill="#3cb03c" stroke="#fff" stroke-width="1.2"/><path d="M34.3 5.2l1.6 1.6 2.8-2.9" fill="none" stroke="#fff" stroke-width="1.3"/></svg>
<div class="t" style="left:397px;top:358px;font-size:11px;color:#333;font-weight:normal;">FREI PBDT</div>
<div class="t" style="left:498px;top:358px;font-size:11px;color:#333;font-weight:normal;">Standard</div>
<div class="t" style="left:573px;top:358px;font-size:11px;color:#333;font-weight:normal;">Food-001</div>
<div class="t" style="left:733px;top:358px;font-size:11px;color:#333;font-weight:normal;">Burger Patty 180g</div>
<div class="t" style="left:927px;top:358px;font-size:11px;color:#333;font-weight:normal;width:60px;text-align:right">1.001</div>
<div class="t" style="left:999px;top:358px;font-size:11px;color:#333;font-weight:normal;">Stück</div>
<div class="t" style="left:1074px;top:358px;font-size:11px;color:#333;font-weight:normal;">27.08.2025 09...</div>
<div class="t" style="left:1168px;top:358px;font-size:11px;color:#333;font-weight:normal;">27.08.2025 14...</div>
<div class="t" style="left:1263px;top:358px;font-size:11px;color:#333;font-weight:normal;">27.08.2025 09...</div>
<div class="t" style="left:1359px;top:358px;font-size:11px;color:#333;font-weight:normal;">001</div>
<div style="position:absolute;left:1476px;top:359px;width:72px;height:18px;background:#1e4c9a"></div>
<div class="t" style="left:1476px;top:358px;font-size:11px;color:#fff;font-weight:normal;width:72px;text-align:center">100,00 %</div>
<div style="position:absolute;left:216px;top:378px;width:1333px;height:21px;background:#dcdcdc"></div>
<div style="position:absolute;left:316px;top:378px;width:1px;height:21px;background:#e4e4e4"></div>
<div style="position:absolute;left:391px;top:378px;width:1px;height:21px;background:#e4e4e4"></div>
<div style="position:absolute;left:492px;top:378px;width:1px;height:21px;background:#e4e4e4"></div>
<div style="position:absolute;left:567px;top:378px;width:1px;height:21px;background:#e4e4e4"></div>
<div style="position:absolute;left:727px;top:378px;width:1px;height:21px;background:#e4e4e4"></div>
<div style="position:absolute;left:927px;top:378px;width:1px;height:21px;background:#e4e4e4"></div>
<div style="position:absolute;left:993px;top:378px;width:1px;height:21px;background:#e4e4e4"></div>
<div style="position:absolute;left:1068px;top:378px;width:1px;height:21px;background:#e4e4e4"></div>
<div style="position:absolute;left:1162px;top:378px;width:1px;height:21px;background:#e4e4e4"></div>
<div style="position:absolute;left:1258px;top:378px;width:1px;height:21px;background:#e4e4e4"></div>
<div style="position:absolute;left:1353px;top:378px;width:1px;height:21px;background:#e4e4e4"></div>
<div style="position:absolute;left:1473px;top:378px;width:1px;height:21px;background:#e4e4e4"></div>
<div style="position:absolute;left:1549px;top:378px;width:1px;height:21px;background:#e4e4e4"></div>
<div class="t" style="left:222px;top:379px;font-size:11px;color:#333;font-weight:normal;">FA000711</div>
<svg style="position:absolute;left:316px;top:380px" width="44" height="18" viewBox="0 0 44 18"><rect x="6.5" y="1.5" width="8" height="15" rx="2" fill="#fff" stroke="#555" stroke-width="1.4"/><circle cx="10.5" cy="12.5" r="2" fill="#3cb03c"/><rect x="9.8" y="4" width="1.4" height="1.4" fill="#555"/><rect x="9.8" y="7" width="1.4" height="1.4" fill="#555"/><g transform="translate(30.5 10.5)" fill="none" stroke="#666" stroke-width="1.3" stroke-linejoin="round"><path d="M-1.05 -5.30L-1.09 -7.32L1.09 -7.32L1.05 -5.30L3.00 -4.49L4.41 -5.94L5.94 -4.41L4.49 -3.00L5.30 -1.05L7.32 -1.09L7.32 1.09L5.30 1.05L4.49 3.00L5.94 4.41L4.41 5.94L3.00 4.49L1.05 5.30L1.09 7.32L-1.09 7.32L-1.05 5.30L-3.00 4.49L-4.41 5.94L-5.94 4.41L-4.49 3.00L-5.30 1.05L-7.32 1.09L-7.32 -1.09L-5.30 -1.05L-4.49 -3.00L-5.94 -4.41L-4.41 -5.94L-3.00 -4.49Z"/><path d="M2.5 2A3 3 0 0 1 -2.5 -1.5" stroke-width="1.1"/></g><circle cx="36.5" cy="5" r="4.8" fill="#3cb03c" stroke="#fff" stroke-width="1.2"/><path d="M34.3 5.2l1.6 1.6 2.8-2.9" fill="none" stroke="#fff" stroke-width="1.3"/></svg>
<div class="t" style="left:397px;top:379px;font-size:11px;color:#333;font-weight:normal;">FREI PBDT</div>
<div class="t" style="left:498px;top:379px;font-size:11px;color:#333;font-weight:normal;">Standard</div>
<div class="t" style="left:573px;top:379px;font-size:11px;color:#333;font-weight:normal;">Food-001</div>
<div class="t" style="left:733px;top:379px;font-size:11px;color:#333;font-weight:normal;">Burger Patty 180g</div>
<div class="t" style="left:927px;top:379px;font-size:11px;color:#333;font-weight:normal;width:60px;text-align:right">1.001</div>
<div class="t" style="left:999px;top:379px;font-size:11px;color:#333;font-weight:normal;">Stück</div>
<div class="t" style="left:1074px;top:379px;font-size:11px;color:#333;font-weight:normal;">27.08.2025 14...</div>
<div class="t" style="left:1168px;top:379px;font-size:11px;color:#333;font-weight:normal;">27.08.2025 14...</div>
<div class="t" style="left:1263px;top:379px;font-size:11px;color:#333;font-weight:normal;">27.08.2025 14...</div>
<div class="t" style="left:1359px;top:379px;font-size:11px;color:#333;font-weight:normal;">001</div>
<div style="position:absolute;left:1476px;top:380px;width:72px;height:18px;background:#1e4c9a"></div>
<div class="t" style="left:1476px;top:379px;font-size:11px;color:#fff;font-weight:normal;width:72px;text-align:center">100,00 %</div>
<div style="position:absolute;left:216px;top:399px;width:1333px;height:21px;background:#f4f4f4"></div>
<div style="position:absolute;left:316px;top:399px;width:1px;height:21px;background:#e0e0e0"></div>
<div style="position:absolute;left:391px;top:399px;width:1px;height:21px;background:#e0e0e0"></div>
<div style="position:absolute;left:492px;top:399px;width:1px;height:21px;background:#e0e0e0"></div>
<div style="position:absolute;left:567px;top:399px;width:1px;height:21px;background:#e0e0e0"></div>
<div style="position:absolute;left:727px;top:399px;width:1px;height:21px;background:#e0e0e0"></div>
<div style="position:absolute;left:927px;top:399px;width:1px;height:21px;background:#e0e0e0"></div>
<div style="position:absolute;left:993px;top:399px;width:1px;height:21px;background:#e0e0e0"></div>
<div style="position:absolute;left:1068px;top:399px;width:1px;height:21px;background:#e0e0e0"></div>
<div style="position:absolute;left:1162px;top:399px;width:1px;height:21px;background:#e0e0e0"></div>
<div style="position:absolute;left:1258px;top:399px;width:1px;height:21px;background:#e0e0e0"></div>
<div style="position:absolute;left:1353px;top:399px;width:1px;height:21px;background:#e0e0e0"></div>
<div style="position:absolute;left:1473px;top:399px;width:1px;height:21px;background:#e0e0e0"></div>
<div style="position:absolute;left:1549px;top:399px;width:1px;height:21px;background:#e0e0e0"></div>
<div class="t" style="left:222px;top:400px;font-size:11px;color:#333;font-weight:normal;">FA000709</div>
<svg style="position:absolute;left:316px;top:401px" width="44" height="18" viewBox="0 0 44 18"><rect x="6.5" y="1.5" width="8" height="15" rx="2" fill="#fff" stroke="#555" stroke-width="1.4"/><circle cx="10.5" cy="12.5" r="2" fill="#3cb03c"/><rect x="9.8" y="4" width="1.4" height="1.4" fill="#555"/><rect x="9.8" y="7" width="1.4" height="1.4" fill="#555"/><g transform="translate(30.5 10.5)" fill="none" stroke="#666" stroke-width="1.3" stroke-linejoin="round"><path d="M-1.05 -5.30L-1.09 -7.32L1.09 -7.32L1.05 -5.30L3.00 -4.49L4.41 -5.94L5.94 -4.41L4.49 -3.00L5.30 -1.05L7.32 -1.09L7.32 1.09L5.30 1.05L4.49 3.00L5.94 4.41L4.41 5.94L3.00 4.49L1.05 5.30L1.09 7.32L-1.09 7.32L-1.05 5.30L-3.00 4.49L-4.41 5.94L-5.94 4.41L-4.49 3.00L-5.30 1.05L-7.32 1.09L-7.32 -1.09L-5.30 -1.05L-4.49 -3.00L-5.94 -4.41L-4.41 -5.94L-3.00 -4.49Z"/><path d="M2.5 2A3 3 0 0 1 -2.5 -1.5" stroke-width="1.1"/></g><circle cx="36.5" cy="5" r="4.8" fill="#3cb03c" stroke="#fff" stroke-width="1.2"/><path d="M34.3 5.2l1.6 1.6 2.8-2.9" fill="none" stroke="#fff" stroke-width="1.3"/></svg>
<div class="t" style="left:397px;top:400px;font-size:11px;color:#333;font-weight:normal;">FREI PBDT</div>
<div class="t" style="left:498px;top:400px;font-size:11px;color:#333;font-weight:normal;">Standard</div>
<div class="t" style="left:573px;top:400px;font-size:11px;color:#333;font-weight:normal;">Food-001</div>
<div class="t" style="left:733px;top:400px;font-size:11px;color:#333;font-weight:normal;">Burger Patty 180g</div>
<div class="t" style="left:927px;top:400px;font-size:11px;color:#333;font-weight:normal;width:60px;text-align:right">1.000</div>
<div class="t" style="left:999px;top:400px;font-size:11px;color:#333;font-weight:normal;">Stück</div>
<div class="t" style="left:1074px;top:400px;font-size:11px;color:#333;font-weight:normal;">27.08.2025 09...</div>
<div class="t" style="left:1168px;top:400px;font-size:11px;color:#333;font-weight:normal;">27.08.2025 09...</div>
<div class="t" style="left:1263px;top:400px;font-size:11px;color:#333;font-weight:normal;">27.08.2025 09...</div>
<div class="t" style="left:1359px;top:400px;font-size:11px;color:#333;font-weight:normal;">001</div>
<div style="position:absolute;left:1476px;top:401px;width:72px;height:18px;background:#1e4c9a"></div>
<div class="t" style="left:1476px;top:400px;font-size:11px;color:#fff;font-weight:normal;width:72px;text-align:center">100,00 %</div>
</div>
<div style="position:absolute;left:190px;top:635.5px;width:1726px;height:1.5px;background:#c2c2c2"></div>
<div style="position:absolute;left:1899px;top:222px;width:17px;height:414px;background:#f0f0f0"></div>
<svg style="position:absolute;left:1901px;top:226px" width="12" height="10" viewBox="0 0 12 10"><path d="M2 7.5L6 3l4 4.5z" fill="#444"/></svg>
<div style="position:absolute;left:1900px;top:249px;width:15px;height:26px;background:#cdcdcd"></div>
<svg style="position:absolute;left:1901px;top:620px" width="12" height="10" viewBox="0 0 12 10"><path d="M2 2.5L6 7l4-4.5z" fill="#444"/></svg>
<div style="position:absolute;left:190px;top:637px;width:1726px;height:11px;background:#ececec"></div>
<div style="position:absolute;left:190px;top:647px;width:1726px;height:1.5px;background:#c6c6c6"></div>
<div style="position:absolute;left:190px;top:647.5px;width:1726px;height:25px;background:#f0f0f0;border-bottom:1px solid #d4d4d4"></div>
<div style="position:absolute;left:216px;top:647.5px;width:1px;height:25px;background:#d4d4d4"></div>
<div style="position:absolute;left:336px;top:647.5px;width:1px;height:25px;background:#d4d4d4"></div>
<div class="t" style="left:222px;top:650.0px;font-size:11px;color:#333;font-weight:normal;">Arbeitsgang</div>
<div style="position:absolute;left:412px;top:647.5px;width:1px;height:25px;background:#d4d4d4"></div>
<div class="t" style="left:342px;top:650.0px;font-size:11px;color:#333;font-weight:normal;">Status</div>
<div style="position:absolute;left:487px;top:647.5px;width:1px;height:25px;background:#d4d4d4"></div>
<div class="t" style="left:418px;top:650.0px;font-size:11px;color:#333;font-weight:normal;">Bezeichnung</div>
<div style="position:absolute;left:597px;top:647.5px;width:1px;height:25px;background:#d4d4d4"></div>
<div class="t" style="left:493px;top:650.0px;font-size:11px;color:#333;font-weight:normal;">Status</div>
<div style="position:absolute;left:828px;top:647.5px;width:1px;height:25px;background:#d4d4d4"></div>
<div class="t" style="left:603px;top:650.0px;font-size:11px;color:#333;font-weight:normal;">Beschreibung</div>
<div style="position:absolute;left:957px;top:647.5px;width:1px;height:25px;background:#d4d4d4"></div>
<div class="t" style="left:834px;top:650.0px;font-size:11px;color:#333;font-weight:normal;">Arbeitsplätze (möglich)</div>
<div style="position:absolute;left:1143px;top:647.5px;width:1px;height:25px;background:#d4d4d4"></div>
<div class="t" style="left:963px;top:650.0px;font-size:11px;color:#333;font-weight:normal;">Arbeitsplatzbezeichnungen (mögli...</div>
<div style="position:absolute;left:1219px;top:647.5px;width:1px;height:25px;background:#d4d4d4"></div>
<div class="t" style="left:1149px;top:650.0px;font-size:11px;color:#333;font-weight:normal;">Kostenstelle</div>
<div style="position:absolute;left:1292px;top:647.5px;width:1px;height:25px;background:#d4d4d4"></div>
<div class="t" style="left:1225px;top:650.0px;font-size:11px;color:#333;font-weight:normal;">Mengen</div>
<div style="position:absolute;left:1359px;top:647.5px;width:1px;height:25px;background:#d4d4d4"></div>
<div class="t" style="left:1298px;top:650.0px;font-size:11px;color:#333;font-weight:normal;">Soll-Menge</div>
<div style="position:absolute;left:1424px;top:647.5px;width:1px;height:25px;background:#d4d4d4"></div>
<div class="t" style="left:1365px;top:650.0px;font-size:11px;color:#333;font-weight:normal;">Gut-Menge</div>
<div style="position:absolute;left:1519px;top:647.5px;width:1px;height:25px;background:#d4d4d4"></div>
<div class="t" style="left:1430px;top:650.0px;font-size:11px;color:#333;font-weight:normal;">Ausschuss-Men...</div>
<div style="position:absolute;left:1594px;top:647.5px;width:1px;height:25px;background:#d4d4d4"></div>
<div class="t" style="left:1525px;top:650.0px;font-size:11px;color:#333;font-weight:normal;">Mengenein...</div>
<div style="position:absolute;left:1689px;top:647.5px;width:1px;height:25px;background:#d4d4d4"></div>
<div class="t" style="left:1600px;top:650.0px;font-size:11px;color:#333;font-weight:normal;">Ist-Start</div>
<div style="position:absolute;left:1784px;top:647.5px;width:1px;height:25px;background:#d4d4d4"></div>
<div class="t" style="left:1695px;top:650.0px;font-size:11px;color:#333;font-weight:normal;">Ist-Ende</div>
<div style="position:absolute;left:1879px;top:647.5px;width:1px;height:25px;background:#d4d4d4"></div>
<div class="t" style="left:1790px;top:650.0px;font-size:11px;color:#333;font-weight:normal;">Geplanter Start</div>
<div style="position:absolute;left:1990px;top:647.5px;width:1px;height:25px;background:#d4d4d4"></div>
<div class="t" style="left:1885px;top:650.0px;font-size:11px;color:#333;font-weight:normal;">Geplanter Ende</div>
<div style="position:absolute;left:216px;top:672.5px;width:1700px;height:21px;background:#dcdcdc"></div>
<div style="position:absolute;left:336px;top:672.5px;width:1px;height:21px;background:#e2e2e2"></div>
<div style="position:absolute;left:412px;top:672.5px;width:1px;height:21px;background:#e2e2e2"></div>
<div style="position:absolute;left:487px;top:672.5px;width:1px;height:21px;background:#e2e2e2"></div>
<div style="position:absolute;left:597px;top:672.5px;width:1px;height:21px;background:#e2e2e2"></div>
<div style="position:absolute;left:828px;top:672.5px;width:1px;height:21px;background:#e2e2e2"></div>
<div style="position:absolute;left:957px;top:672.5px;width:1px;height:21px;background:#e2e2e2"></div>
<div style="position:absolute;left:1143px;top:672.5px;width:1px;height:21px;background:#e2e2e2"></div>
<div style="position:absolute;left:1219px;top:672.5px;width:1px;height:21px;background:#e2e2e2"></div>
<div style="position:absolute;left:1292px;top:672.5px;width:1px;height:21px;background:#e2e2e2"></div>
<div style="position:absolute;left:1359px;top:672.5px;width:1px;height:21px;background:#e2e2e2"></div>
<div style="position:absolute;left:1424px;top:672.5px;width:1px;height:21px;background:#e2e2e2"></div>
<div style="position:absolute;left:1519px;top:672.5px;width:1px;height:21px;background:#e2e2e2"></div>
<div style="position:absolute;left:1594px;top:672.5px;width:1px;height:21px;background:#e2e2e2"></div>
<div style="position:absolute;left:1689px;top:672.5px;width:1px;height:21px;background:#e2e2e2"></div>
<div style="position:absolute;left:1784px;top:672.5px;width:1px;height:21px;background:#e2e2e2"></div>
<div style="position:absolute;left:1879px;top:672.5px;width:1px;height:21px;background:#e2e2e2"></div>
<div style="position:absolute;left:1990px;top:672.5px;width:1px;height:21px;background:#e2e2e2"></div>
<div class="t" style="left:225px;top:673.5px;font-size:11px;color:#666;font-weight:normal;">+</div>
<div class="t" style="left:247px;top:673.5px;font-size:11px;color:#333;font-weight:normal;">001</div>
<svg style="position:absolute;left:339px;top:674.5px" width="18" height="18" viewBox="0 0 18 18"><circle cx="9" cy="9" r="7.8" fill="none" stroke="#7cc77c" stroke-width="1.4"/><path d="M5 9.2l2.8 2.8 5.2-5.2" fill="none" stroke="#44a844" stroke-width="2"/></svg>
<div class="t" style="left:418px;top:673.5px;font-size:11px;color:#333;font-weight:normal;">Stampfen</div>
<div class="t" style="left:493px;top:673.5px;font-size:11px;color:#333;font-weight:normal;">ABGS</div>
<div class="t" style="left:834px;top:673.5px;font-size:11px;color:#333;font-weight:normal;">AP003</div>
<div class="t" style="left:963px;top:673.5px;font-size:11px;color:#333;font-weight:normal;">Burgerpresse</div>
<div class="t" style="left:1525px;top:673.5px;font-size:11px;color:#333;font-weight:normal;">Stück</div>
<div class="t" style="left:1600px;top:673.5px;font-size:11px;color:#333;font-weight:normal;">29.07.2025 13...</div>
<div class="t" style="left:1695px;top:673.5px;font-size:11px;color:#333;font-weight:normal;">30.07.2025 08...</div>
<div style="position:absolute;left:1220.5px;top:673.5px;width:71px;height:18.5px;background:#4169e1"></div>
<div class="t" style="left:1302px;top:673.5px;font-size:11px;color:#333;font-weight:normal;">1.200 (1...</div>
<svg style="position:absolute;left:197px;top:677.5px" width="14" height="11" viewBox="0 0 14 11"><path d="M1 5.5h10M7.5 2l3.5 3.5L7.5 9" fill="none" stroke="#2f6fc0" stroke-width="1.4"/></svg>
<div style="position:absolute;left:216px;top:693.5px;width:1700px;height:21px;background:#f4f4f4"></div>
<div style="position:absolute;left:336px;top:693.5px;width:1px;height:21px;background:#e2e2e2"></div>
<div style="position:absolute;left:412px;top:693.5px;width:1px;height:21px;background:#e2e2e2"></div>
<div style="position:absolute;left:487px;top:693.5px;width:1px;height:21px;background:#e2e2e2"></div>
<div style="position:absolute;left:597px;top:693.5px;width:1px;height:21px;background:#e2e2e2"></div>
<div style="position:absolute;left:828px;top:693.5px;width:1px;height:21px;background:#e2e2e2"></div>
<div style="position:absolute;left:957px;top:693.5px;width:1px;height:21px;background:#e2e2e2"></div>
<div style="position:absolute;left:1143px;top:693.5px;width:1px;height:21px;background:#e2e2e2"></div>
<div style="position:absolute;left:1219px;top:693.5px;width:1px;height:21px;background:#e2e2e2"></div>
<div style="position:absolute;left:1292px;top:693.5px;width:1px;height:21px;background:#e2e2e2"></div>
<div style="position:absolute;left:1359px;top:693.5px;width:1px;height:21px;background:#e2e2e2"></div>
<div style="position:absolute;left:1424px;top:693.5px;width:1px;height:21px;background:#e2e2e2"></div>
<div style="position:absolute;left:1519px;top:693.5px;width:1px;height:21px;background:#e2e2e2"></div>
<div style="position:absolute;left:1594px;top:693.5px;width:1px;height:21px;background:#e2e2e2"></div>
<div style="position:absolute;left:1689px;top:693.5px;width:1px;height:21px;background:#e2e2e2"></div>
<div style="position:absolute;left:1784px;top:693.5px;width:1px;height:21px;background:#e2e2e2"></div>
<div style="position:absolute;left:1879px;top:693.5px;width:1px;height:21px;background:#e2e2e2"></div>
<div style="position:absolute;left:1990px;top:693.5px;width:1px;height:21px;background:#e2e2e2"></div>
<div class="t" style="left:225px;top:694.5px;font-size:11px;color:#666;font-weight:normal;">+</div>
<div class="t" style="left:247px;top:694.5px;font-size:11px;color:#333;font-weight:normal;">002</div>
<svg style="position:absolute;left:339px;top:695.5px" width="18" height="18" viewBox="0 0 18 18"><circle cx="9" cy="9" r="7.8" fill="none" stroke="#7cc77c" stroke-width="1.4"/><path d="M5 9.2l2.8 2.8 5.2-5.2" fill="none" stroke="#44a844" stroke-width="2"/></svg>
<div class="t" style="left:418px;top:694.5px;font-size:11px;color:#333;font-weight:normal;">Schockfros...</div>
<div class="t" style="left:493px;top:694.5px;font-size:11px;color:#333;font-weight:normal;">ABGS</div>
<div class="t" style="left:1525px;top:694.5px;font-size:11px;color:#333;font-weight:normal;">Stück</div>
<div style="position:absolute;left:1220.5px;top:694.5px;width:71px;height:18.5px;background:#4169e1"></div>
<div class="t" style="left:1302px;top:694.5px;font-size:11px;color:#333;font-weight:normal;">1.200 (1...</div>
<div style="position:absolute;left:216px;top:714.5px;width:1700px;height:21px;background:#dcdcdc"></div>
<div style="position:absolute;left:336px;top:714.5px;width:1px;height:21px;background:#e2e2e2"></div>
<div style="position:absolute;left:412px;top:714.5px;width:1px;height:21px;background:#e2e2e2"></div>
<div style="position:absolute;left:487px;top:714.5px;width:1px;height:21px;background:#e2e2e2"></div>
<div style="position:absolute;left:597px;top:714.5px;width:1px;height:21px;background:#e2e2e2"></div>
<div style="position:absolute;left:828px;top:714.5px;width:1px;height:21px;background:#e2e2e2"></div>
<div style="position:absolute;left:957px;top:714.5px;width:1px;height:21px;background:#e2e2e2"></div>
<div style="position:absolute;left:1143px;top:714.5px;width:1px;height:21px;background:#e2e2e2"></div>
<div style="position:absolute;left:1219px;top:714.5px;width:1px;height:21px;background:#e2e2e2"></div>
<div style="position:absolute;left:1292px;top:714.5px;width:1px;height:21px;background:#e2e2e2"></div>
<div style="position:absolute;left:1359px;top:714.5px;width:1px;height:21px;background:#e2e2e2"></div>
<div style="position:absolute;left:1424px;top:714.5px;width:1px;height:21px;background:#e2e2e2"></div>
<div style="position:absolute;left:1519px;top:714.5px;width:1px;height:21px;background:#e2e2e2"></div>
<div style="position:absolute;left:1594px;top:714.5px;width:1px;height:21px;background:#e2e2e2"></div>
<div style="position:absolute;left:1689px;top:714.5px;width:1px;height:21px;background:#e2e2e2"></div>
<div style="position:absolute;left:1784px;top:714.5px;width:1px;height:21px;background:#e2e2e2"></div>
<div style="position:absolute;left:1879px;top:714.5px;width:1px;height:21px;background:#e2e2e2"></div>
<div style="position:absolute;left:1990px;top:714.5px;width:1px;height:21px;background:#e2e2e2"></div>
<div class="t" style="left:225px;top:715.5px;font-size:11px;color:#666;font-weight:normal;">+</div>
<div class="t" style="left:247px;top:715.5px;font-size:11px;color:#333;font-weight:normal;">003</div>
<svg style="position:absolute;left:339px;top:716.5px" width="18" height="18" viewBox="0 0 18 18"><circle cx="9" cy="9" r="7.8" fill="none" stroke="#7cc77c" stroke-width="1.4"/><path d="M5 9.2l2.8 2.8 5.2-5.2" fill="none" stroke="#44a844" stroke-width="2"/></svg>
<div class="t" style="left:418px;top:715.5px;font-size:11px;color:#333;font-weight:normal;">Prüfen</div>
<div class="t" style="left:493px;top:715.5px;font-size:11px;color:#333;font-weight:normal;">ABGS</div>
<div class="t" style="left:1525px;top:715.5px;font-size:11px;color:#333;font-weight:normal;">Stück</div>
<div style="position:absolute;left:1220.5px;top:715.5px;width:71px;height:18.5px;background:#4169e1"></div>
<div class="t" style="left:1302px;top:715.5px;font-size:11px;color:#333;font-weight:normal;">1.200 (1...</div>
<div style="position:absolute;left:216px;top:735.5px;width:1700px;height:21px;background:#f4f4f4"></div>
<div style="position:absolute;left:336px;top:735.5px;width:1px;height:21px;background:#e2e2e2"></div>
<div style="position:absolute;left:412px;top:735.5px;width:1px;height:21px;background:#e2e2e2"></div>
<div style="position:absolute;left:487px;top:735.5px;width:1px;height:21px;background:#e2e2e2"></div>
<div style="position:absolute;left:597px;top:735.5px;width:1px;height:21px;background:#e2e2e2"></div>
<div style="position:absolute;left:828px;top:735.5px;width:1px;height:21px;background:#e2e2e2"></div>
<div style="position:absolute;left:957px;top:735.5px;width:1px;height:21px;background:#e2e2e2"></div>
<div style="position:absolute;left:1143px;top:735.5px;width:1px;height:21px;background:#e2e2e2"></div>
<div style="position:absolute;left:1219px;top:735.5px;width:1px;height:21px;background:#e2e2e2"></div>
<div style="position:absolute;left:1292px;top:735.5px;width:1px;height:21px;background:#e2e2e2"></div>
<div style="position:absolute;left:1359px;top:735.5px;width:1px;height:21px;background:#e2e2e2"></div>
<div style="position:absolute;left:1424px;top:735.5px;width:1px;height:21px;background:#e2e2e2"></div>
<div style="position:absolute;left:1519px;top:735.5px;width:1px;height:21px;background:#e2e2e2"></div>
<div style="position:absolute;left:1594px;top:735.5px;width:1px;height:21px;background:#e2e2e2"></div>
<div style="position:absolute;left:1689px;top:735.5px;width:1px;height:21px;background:#e2e2e2"></div>
<div style="position:absolute;left:1784px;top:735.5px;width:1px;height:21px;background:#e2e2e2"></div>
<div style="position:absolute;left:1879px;top:735.5px;width:1px;height:21px;background:#e2e2e2"></div>
<div style="position:absolute;left:1990px;top:735.5px;width:1px;height:21px;background:#e2e2e2"></div>
<div class="t" style="left:225px;top:736.5px;font-size:11px;color:#666;font-weight:normal;">+</div>
<div class="t" style="left:247px;top:736.5px;font-size:11px;color:#333;font-weight:normal;">004</div>
<svg style="position:absolute;left:339px;top:737.5px" width="18" height="18" viewBox="0 0 18 18"><circle cx="9" cy="9" r="7.8" fill="none" stroke="#7cc77c" stroke-width="1.4"/><path d="M5 9.2l2.8 2.8 5.2-5.2" fill="none" stroke="#44a844" stroke-width="2"/></svg>
<div class="t" style="left:418px;top:736.5px;font-size:11px;color:#333;font-weight:normal;">Verpacken</div>
<div class="t" style="left:493px;top:736.5px;font-size:11px;color:#333;font-weight:normal;">ABGS</div>
<div class="t" style="left:1525px;top:736.5px;font-size:11px;color:#333;font-weight:normal;">Stück</div>
<div style="position:absolute;left:1220.5px;top:736.5px;width:71px;height:18.5px;background:#4169e1"></div>
<div class="t" style="left:1302px;top:736.5px;font-size:11px;color:#333;font-weight:normal;">1.200 (1...</div>
<div style="position:absolute;left:216px;top:756.5px;width:1700px;height:1px;background:#d8d8d8"></div>
<div style="position:absolute;left:215px;top:672.5px;width:1px;height:85px;background:#d8d8d8"></div>
<div style="position:absolute;left:190px;top:984px;width:1726px;height:18px;background:#f0f0f0;border-left:1px solid #c8c8c8"></div>
<svg style="position:absolute;left:193px;top:988px" width="12" height="10" viewBox="0 0 12 10"><path d="M8 1L3.5 5 8 9z" fill="#444"/></svg>
<div style="position:absolute;left:206px;top:985px;width:1545px;height:16px;background:#d9d9d9"></div>
<svg style="position:absolute;left:1898px;top:988px" width="12" height="10" viewBox="0 0 12 10"><path d="M4 1l4.5 4L4 9z" fill="#444"/></svg>
<div style="position:absolute;left:189px;top:179px;width:1.6px;height:823px;background:#bfbfbf"></div>
<div style="position:absolute;left:0px;top:1005px;width:1920px;height:27px;background:#106ebe"></div>
<svg style="position:absolute;left:3px;top:1009px" width="17" height="18" viewBox="0 0 17 18"><circle cx="8.5" cy="5.5" r="4" fill="none" stroke="#a9d0f5" stroke-width="1.5"/><path d="M2 17v-2a5 5 0 0 1 5-5h3a5 5 0 0 1 5 5v2z" fill="none" stroke="#a9d0f5" stroke-width="1.5"/></svg>
<div class="t" style="left:23px;top:1008px;font-size:10.3px;color:#e8f1fb;font-weight:normal;">Maximilian Claes</div>
<svg style="position:absolute;left:114px;top:1009px" width="18" height="18" viewBox="0 0 18 18"><circle cx="9" cy="9" r="7.5" fill="none" stroke="#3aa85a" stroke-width="1.6"/><path d="M5 9.3l2.8 2.8L13 7" fill="none" stroke="#3fb560" stroke-width="1.9"/></svg>
<div class="t" style="left:136px;top:1008px;font-size:10.3px;color:#e8f1fb;font-weight:normal;">Service Manager</div>
<svg style="position:absolute;left:229px;top:1009px" width="18" height="18" viewBox="0 0 18 18"><g fill="none" stroke="#a9d0f5" stroke-width="1.4"><ellipse cx="9" cy="4" rx="6" ry="2.5"/><path d="M3 4v10c0 1.5 2.7 2.5 6 2.5s6-1 6-2.5V4M3 9c0 1.5 2.7 2.5 6 2.5s6-1 6-2.5"/></g></svg>
<div class="t" style="left:251px;top:1008px;font-size:10.3px;color:#e8f1fb;font-weight:normal;">PM stable</div>
<svg style="position:absolute;left:311px;top:1009px" width="18" height="18" viewBox="0 0 18 18"><g fill="none" stroke="#a9d0f5" stroke-width="1.4"><rect x="1.5" y="2" width="15" height="10"/><path d="M9 12v3M5 16h8"/></g></svg>
<div class="t" style="left:333px;top:1008px;font-size:10.3px;color:#e8f1fb;font-weight:normal;">wyong</div>
<svg style="position:absolute;left:379px;top:1009px" width="18" height="18" viewBox="0 0 18 18"><g fill="none" stroke="#a9d0f5" stroke-width="1.4"><path d="M4 15a3.5 3.5 0 0 1 0-7 5 5 0 0 1 9.5-1.5A4 4 0 0 1 14 15z"/><rect x="6" y="9" width="5" height="5"/></g></svg>
<div class="t" style="left:400px;top:1008px;font-size:10.3px;color:#e8f1fb;font-weight:normal;">FASTEC GmbH</div>
<svg style="position:absolute;left:482px;top:1009px" width="18" height="18" viewBox="0 0 18 18"><g fill="none" stroke="#a9d0f5" stroke-width="1.4"><rect x="2" y="2" width="11" height="14"/><path d="M4.5 11h6M4.5 13.5h6"/><circle cx="11.5" cy="6" r="3"/><path d="M13.5 8l2.5 2.5"/></g></svg>
<div class="t" style="left:504px;top:1008px;font-size:10.3px;color:#e8f1fb;font-weight:normal;">258</div>
</div></body></html>
